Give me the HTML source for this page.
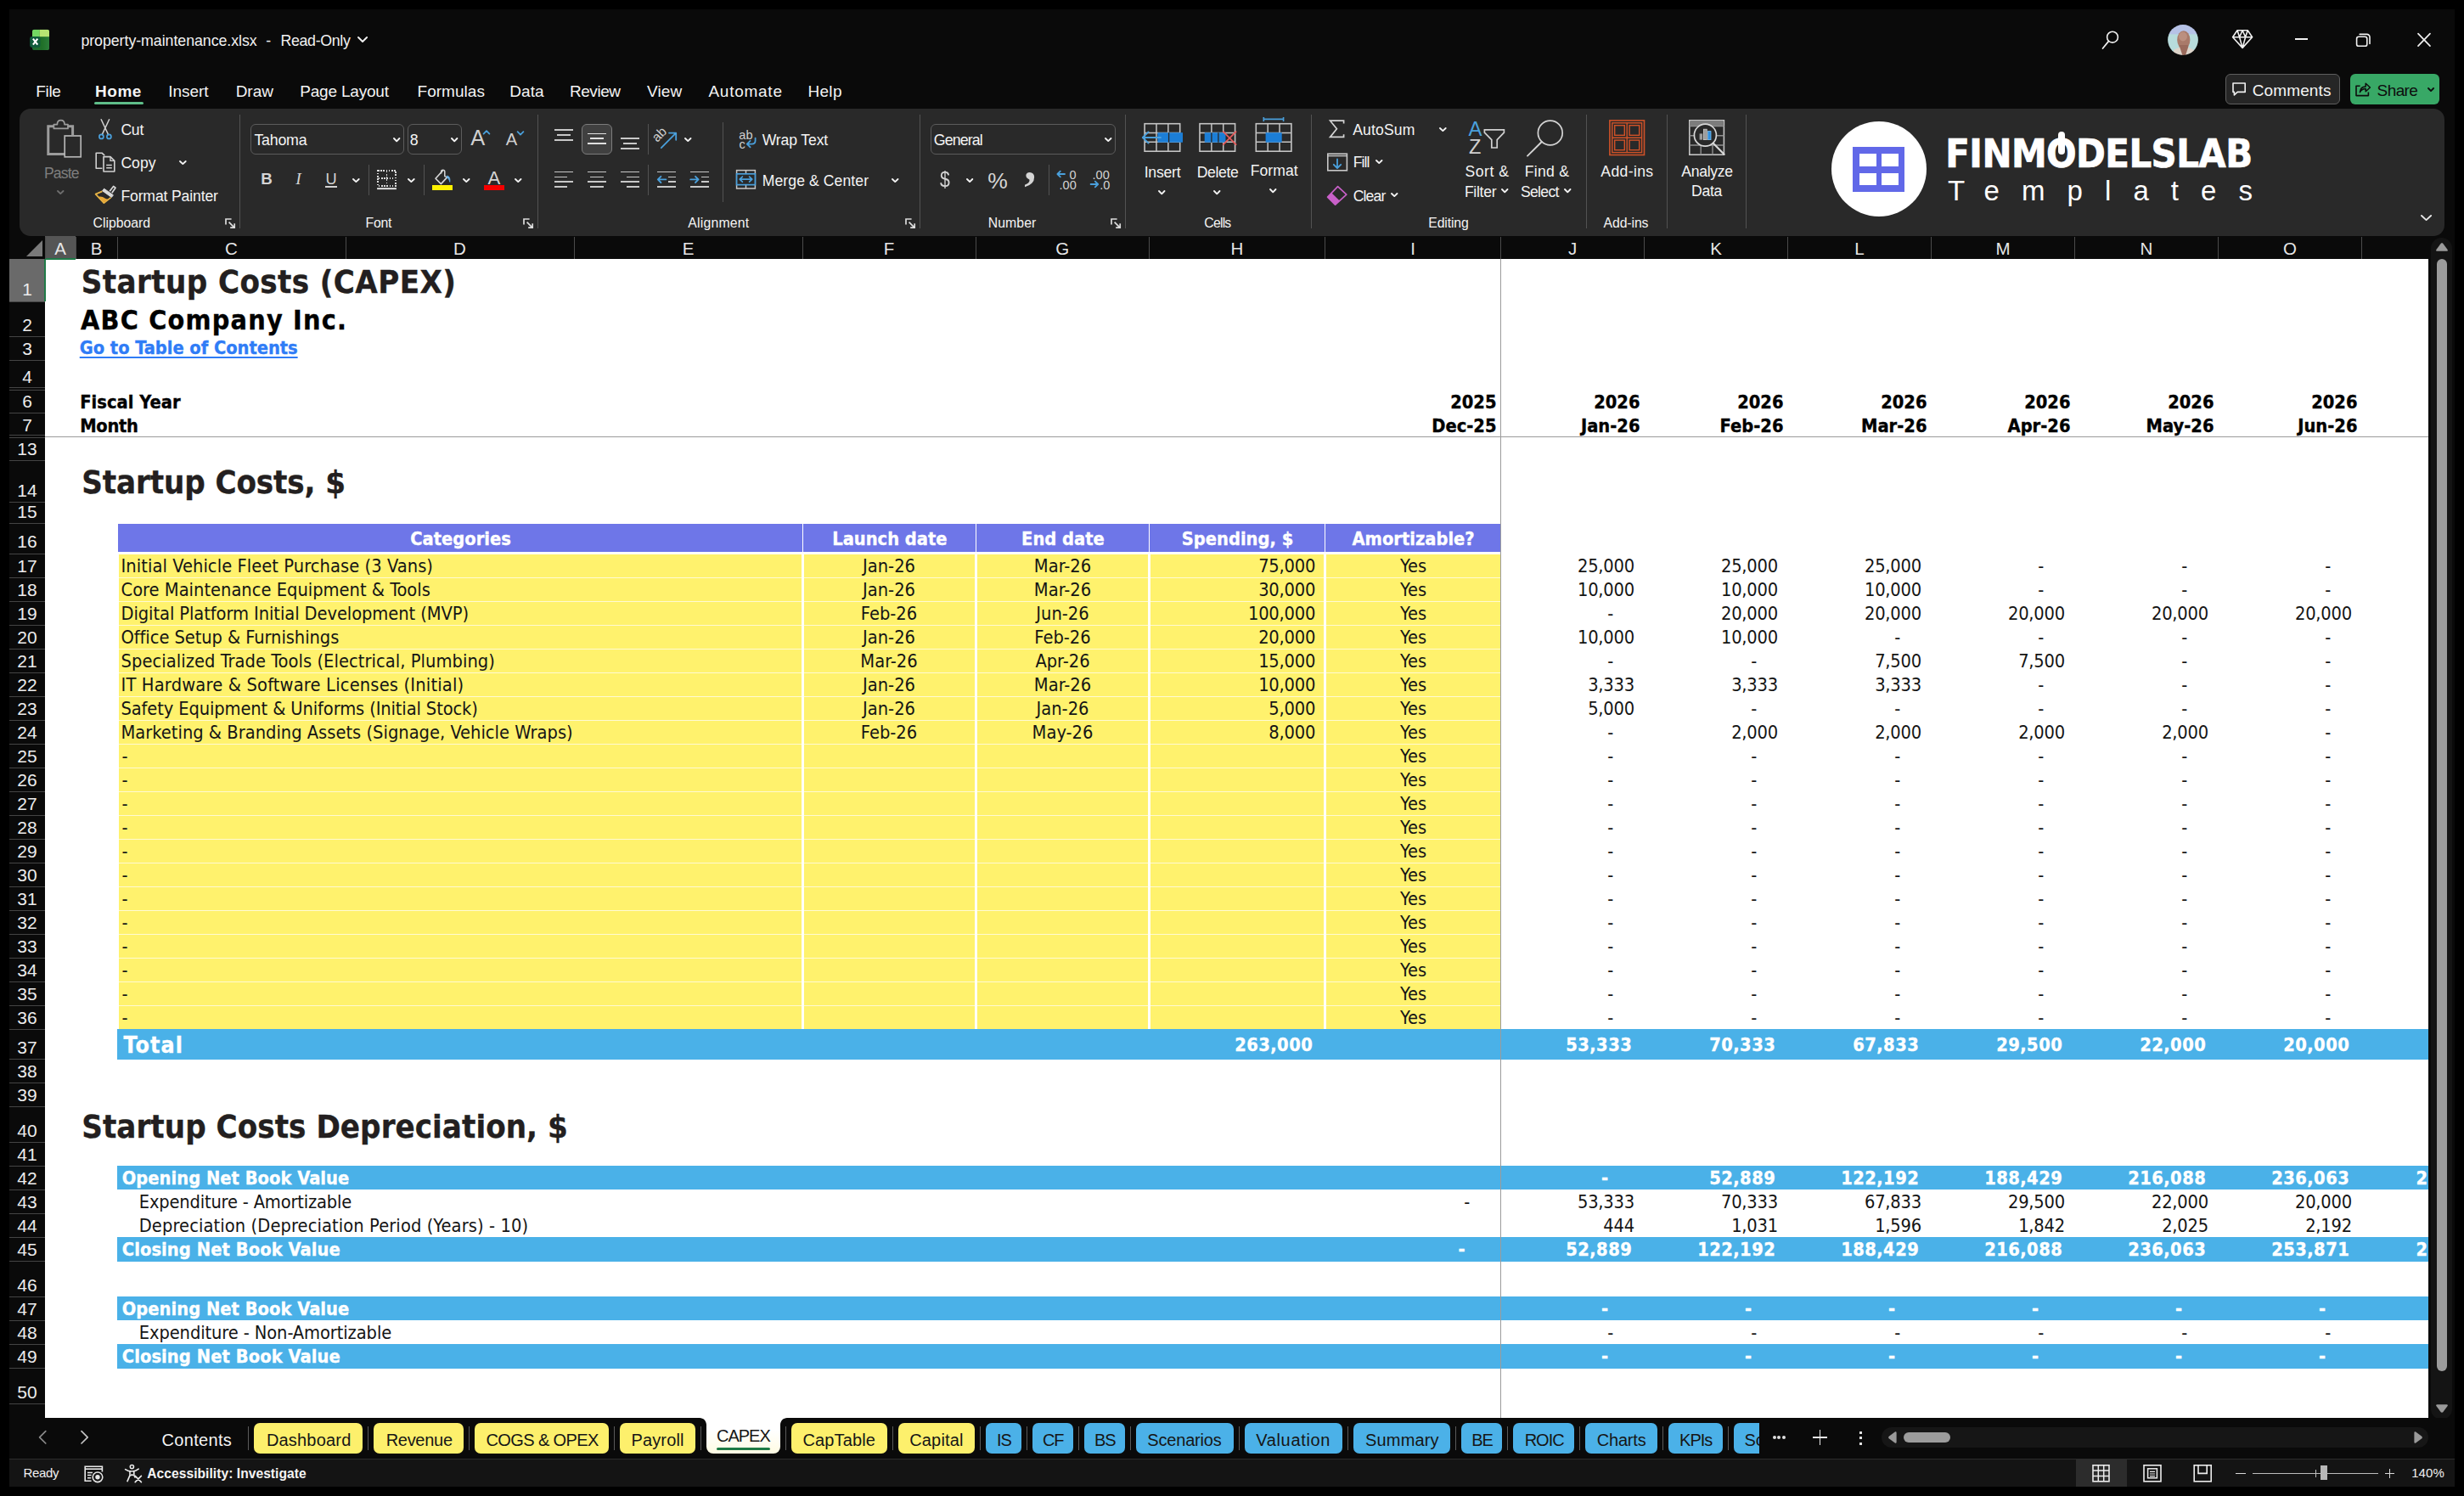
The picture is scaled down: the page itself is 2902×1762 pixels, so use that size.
<!DOCTYPE html>
<html lang="en"><head><meta charset="utf-8"><title>property-maintenance.xlsx - Excel</title>
<style>
html,body{margin:0;padding:0;background:#000;}
body{width:2902px;height:1762px;position:relative;overflow:hidden;font-family:'Liberation Sans',sans-serif;}
.a,.s,.u{position:absolute;}
.s,.u{line-height:1;white-space:pre;}
.s{font-family:'DejaVu Sans Condensed','Liberation Sans',sans-serif;}
.u{font-family:'Liberation Sans',sans-serif;}
.bd{-webkit-text-stroke-width:.35px;}
#win{position:absolute;left:11px;top:11px;width:2880px;height:1739px;background:#0a0a0a;}
svg{overflow:visible;}
</style></head>
<body>
<div id="win"></div>
<div class="a" style="left:53px;top:305px;width:2807px;height:1364.5px;background:#fff;"></div>
<div class="a" style="left:11px;top:278px;width:2849px;height:27px;background:#0a0a0a;"></div>
<div class="a" style="left:53px;top:278px;width:36px;height:27px;background:#555;border-bottom:1.3px solid #1f7a48;box-sizing:border-box;"></div>
<svg class="a" style="left:28px;top:281px" width="24" height="23" viewBox="0 0 24 23"><path d="M22 2V21H3Z" fill="#7a7a7a"/></svg>
<span class="u" style="top:283.02px;font-size:20.5px;color:#e6e6e6;left:71px;transform:translateX(-50%);">A</span>
<span class="u" style="top:283.02px;font-size:20.5px;color:#e6e6e6;left:113.5px;transform:translateX(-50%);">B</span>
<span class="u" style="top:283.02px;font-size:20.5px;color:#e6e6e6;left:272.5px;transform:translateX(-50%);">C</span>
<span class="u" style="top:283.02px;font-size:20.5px;color:#e6e6e6;left:541.5px;transform:translateX(-50%);">D</span>
<span class="u" style="top:283.02px;font-size:20.5px;color:#e6e6e6;left:810.5px;transform:translateX(-50%);">E</span>
<span class="u" style="top:283.02px;font-size:20.5px;color:#e6e6e6;left:1047px;transform:translateX(-50%);">F</span>
<span class="u" style="top:283.02px;font-size:20.5px;color:#e6e6e6;left:1251.25px;transform:translateX(-50%);">G</span>
<span class="u" style="top:283.02px;font-size:20.5px;color:#e6e6e6;left:1457px;transform:translateX(-50%);">H</span>
<span class="u" style="top:283.02px;font-size:20.5px;color:#e6e6e6;left:1664px;transform:translateX(-50%);">I</span>
<span class="u" style="top:283.02px;font-size:20.5px;color:#e6e6e6;left:1852px;transform:translateX(-50%);">J</span>
<span class="u" style="top:283.02px;font-size:20.5px;color:#e6e6e6;left:2021px;transform:translateX(-50%);">K</span>
<span class="u" style="top:283.02px;font-size:20.5px;color:#e6e6e6;left:2190px;transform:translateX(-50%);">L</span>
<span class="u" style="top:283.02px;font-size:20.5px;color:#e6e6e6;left:2359px;transform:translateX(-50%);">M</span>
<span class="u" style="top:283.02px;font-size:20.5px;color:#e6e6e6;left:2528px;transform:translateX(-50%);">N</span>
<span class="u" style="top:283.02px;font-size:20.5px;color:#e6e6e6;left:2697px;transform:translateX(-50%);">O</span>
<div class="a" style="left:88.5px;top:279px;width:1px;height:26px;background:#4b4b4b;"></div>
<div class="a" style="left:137.5px;top:279px;width:1px;height:26px;background:#4b4b4b;"></div>
<div class="a" style="left:406.5px;top:279px;width:1px;height:26px;background:#4b4b4b;"></div>
<div class="a" style="left:675.5px;top:279px;width:1px;height:26px;background:#4b4b4b;"></div>
<div class="a" style="left:944.5px;top:279px;width:1px;height:26px;background:#4b4b4b;"></div>
<div class="a" style="left:1148.5px;top:279px;width:1px;height:26px;background:#4b4b4b;"></div>
<div class="a" style="left:1353px;top:279px;width:1px;height:26px;background:#4b4b4b;"></div>
<div class="a" style="left:1560px;top:279px;width:1px;height:26px;background:#4b4b4b;"></div>
<div class="a" style="left:1767px;top:279px;width:1px;height:26px;background:#4b4b4b;"></div>
<div class="a" style="left:1936px;top:279px;width:1px;height:26px;background:#4b4b4b;"></div>
<div class="a" style="left:2105px;top:279px;width:1px;height:26px;background:#4b4b4b;"></div>
<div class="a" style="left:2274px;top:279px;width:1px;height:26px;background:#4b4b4b;"></div>
<div class="a" style="left:2443px;top:279px;width:1px;height:26px;background:#4b4b4b;"></div>
<div class="a" style="left:2612px;top:279px;width:1px;height:26px;background:#4b4b4b;"></div>
<div class="a" style="left:2781px;top:279px;width:1px;height:26px;background:#4b4b4b;"></div>
<div class="a" style="left:52.5px;top:279px;width:1px;height:26px;background:#4b4b4b;"></div>
<div class="a" style="left:11px;top:305px;width:42px;height:1364.5px;background:#0a0a0a;"></div>
<div class="a" style="left:11px;top:305px;width:42px;height:50px;background:#6a6a6a;border-right:1.3px solid #1f7a48;box-sizing:border-box;"></div>
<span class="u" style="top:330.04px;font-size:21px;color:#ececec;left:32px;transform:translateX(-50%);">1</span>
<div class="a" style="left:11px;top:354.5px;width:42px;height:1px;background:#444;"></div>
<span class="u" style="top:372.04px;font-size:21px;color:#ececec;left:32px;transform:translateX(-50%);">2</span>
<div class="a" style="left:11px;top:395.5px;width:42px;height:1px;background:#444;"></div>
<span class="u" style="top:400.04px;font-size:21px;color:#ececec;left:32px;transform:translateX(-50%);">3</span>
<div class="a" style="left:11px;top:424px;width:42px;height:1px;background:#444;"></div>
<span class="u" style="top:433.04px;font-size:21px;color:#ececec;left:32px;transform:translateX(-50%);">4</span>
<div class="a" style="left:11px;top:455.5px;width:42px;height:1px;background:#444;"></div>
<span class="u" style="top:462.04px;font-size:21px;color:#ececec;left:32px;transform:translateX(-50%);">6</span>
<div class="a" style="left:11px;top:485.5px;width:42px;height:1px;background:#444;"></div>
<span class="u" style="top:490.04px;font-size:21px;color:#ececec;left:32px;transform:translateX(-50%);">7</span>
<div class="a" style="left:11px;top:512px;width:42px;height:1px;background:#444;"></div>
<span class="u" style="top:518.04px;font-size:21px;color:#ececec;left:32px;transform:translateX(-50%);">13</span>
<div class="a" style="left:11px;top:541.5px;width:42px;height:1px;background:#444;"></div>
<span class="u" style="top:567.04px;font-size:21px;color:#ececec;left:32px;transform:translateX(-50%);">14</span>
<div class="a" style="left:11px;top:591px;width:42px;height:1px;background:#444;"></div>
<span class="u" style="top:592.04px;font-size:21px;color:#ececec;left:32px;transform:translateX(-50%);">15</span>
<div class="a" style="left:11px;top:616px;width:42px;height:1px;background:#444;"></div>
<span class="u" style="top:627.04px;font-size:21px;color:#ececec;left:32px;transform:translateX(-50%);">16</span>
<div class="a" style="left:11px;top:652px;width:42px;height:1px;background:#444;"></div>
<span class="u" style="top:656.04px;font-size:21px;color:#ececec;left:32px;transform:translateX(-50%);">17</span>
<div class="a" style="left:11px;top:680px;width:42px;height:1px;background:#444;"></div>
<span class="u" style="top:684.04px;font-size:21px;color:#ececec;left:32px;transform:translateX(-50%);">18</span>
<div class="a" style="left:11px;top:708px;width:42px;height:1px;background:#444;"></div>
<span class="u" style="top:712.04px;font-size:21px;color:#ececec;left:32px;transform:translateX(-50%);">19</span>
<div class="a" style="left:11px;top:736px;width:42px;height:1px;background:#444;"></div>
<span class="u" style="top:740.04px;font-size:21px;color:#ececec;left:32px;transform:translateX(-50%);">20</span>
<div class="a" style="left:11px;top:764px;width:42px;height:1px;background:#444;"></div>
<span class="u" style="top:768.04px;font-size:21px;color:#ececec;left:32px;transform:translateX(-50%);">21</span>
<div class="a" style="left:11px;top:792px;width:42px;height:1px;background:#444;"></div>
<span class="u" style="top:796.04px;font-size:21px;color:#ececec;left:32px;transform:translateX(-50%);">22</span>
<div class="a" style="left:11px;top:820px;width:42px;height:1px;background:#444;"></div>
<span class="u" style="top:824.04px;font-size:21px;color:#ececec;left:32px;transform:translateX(-50%);">23</span>
<div class="a" style="left:11px;top:848px;width:42px;height:1px;background:#444;"></div>
<span class="u" style="top:852.04px;font-size:21px;color:#ececec;left:32px;transform:translateX(-50%);">24</span>
<div class="a" style="left:11px;top:876px;width:42px;height:1px;background:#444;"></div>
<span class="u" style="top:880.04px;font-size:21px;color:#ececec;left:32px;transform:translateX(-50%);">25</span>
<div class="a" style="left:11px;top:904px;width:42px;height:1px;background:#444;"></div>
<span class="u" style="top:908.04px;font-size:21px;color:#ececec;left:32px;transform:translateX(-50%);">26</span>
<div class="a" style="left:11px;top:932px;width:42px;height:1px;background:#444;"></div>
<span class="u" style="top:936.04px;font-size:21px;color:#ececec;left:32px;transform:translateX(-50%);">27</span>
<div class="a" style="left:11px;top:960px;width:42px;height:1px;background:#444;"></div>
<span class="u" style="top:964.04px;font-size:21px;color:#ececec;left:32px;transform:translateX(-50%);">28</span>
<div class="a" style="left:11px;top:988px;width:42px;height:1px;background:#444;"></div>
<span class="u" style="top:992.04px;font-size:21px;color:#ececec;left:32px;transform:translateX(-50%);">29</span>
<div class="a" style="left:11px;top:1016px;width:42px;height:1px;background:#444;"></div>
<span class="u" style="top:1020.04px;font-size:21px;color:#ececec;left:32px;transform:translateX(-50%);">30</span>
<div class="a" style="left:11px;top:1044px;width:42px;height:1px;background:#444;"></div>
<span class="u" style="top:1048.04px;font-size:21px;color:#ececec;left:32px;transform:translateX(-50%);">31</span>
<div class="a" style="left:11px;top:1072px;width:42px;height:1px;background:#444;"></div>
<span class="u" style="top:1076.04px;font-size:21px;color:#ececec;left:32px;transform:translateX(-50%);">32</span>
<div class="a" style="left:11px;top:1100px;width:42px;height:1px;background:#444;"></div>
<span class="u" style="top:1104.04px;font-size:21px;color:#ececec;left:32px;transform:translateX(-50%);">33</span>
<div class="a" style="left:11px;top:1128px;width:42px;height:1px;background:#444;"></div>
<span class="u" style="top:1132.04px;font-size:21px;color:#ececec;left:32px;transform:translateX(-50%);">34</span>
<div class="a" style="left:11px;top:1156px;width:42px;height:1px;background:#444;"></div>
<span class="u" style="top:1160.04px;font-size:21px;color:#ececec;left:32px;transform:translateX(-50%);">35</span>
<div class="a" style="left:11px;top:1184px;width:42px;height:1px;background:#444;"></div>
<span class="u" style="top:1188.04px;font-size:21px;color:#ececec;left:32px;transform:translateX(-50%);">36</span>
<div class="a" style="left:11px;top:1212px;width:42px;height:1px;background:#444;"></div>
<span class="u" style="top:1223.04px;font-size:21px;color:#ececec;left:32px;transform:translateX(-50%);">37</span>
<div class="a" style="left:11px;top:1247px;width:42px;height:1px;background:#444;"></div>
<span class="u" style="top:1251.04px;font-size:21px;color:#ececec;left:32px;transform:translateX(-50%);">38</span>
<div class="a" style="left:11px;top:1275px;width:42px;height:1px;background:#444;"></div>
<span class="u" style="top:1279.04px;font-size:21px;color:#ececec;left:32px;transform:translateX(-50%);">39</span>
<div class="a" style="left:11px;top:1303px;width:42px;height:1px;background:#444;"></div>
<span class="u" style="top:1321.04px;font-size:21px;color:#ececec;left:32px;transform:translateX(-50%);">40</span>
<div class="a" style="left:11px;top:1345px;width:42px;height:1px;background:#444;"></div>
<span class="u" style="top:1349.04px;font-size:21px;color:#ececec;left:32px;transform:translateX(-50%);">41</span>
<div class="a" style="left:11px;top:1373px;width:42px;height:1px;background:#444;"></div>
<span class="u" style="top:1377.04px;font-size:21px;color:#ececec;left:32px;transform:translateX(-50%);">42</span>
<div class="a" style="left:11px;top:1401px;width:42px;height:1px;background:#444;"></div>
<span class="u" style="top:1405.04px;font-size:21px;color:#ececec;left:32px;transform:translateX(-50%);">43</span>
<div class="a" style="left:11px;top:1429px;width:42px;height:1px;background:#444;"></div>
<span class="u" style="top:1433.04px;font-size:21px;color:#ececec;left:32px;transform:translateX(-50%);">44</span>
<div class="a" style="left:11px;top:1457px;width:42px;height:1px;background:#444;"></div>
<span class="u" style="top:1461.04px;font-size:21px;color:#ececec;left:32px;transform:translateX(-50%);">45</span>
<div class="a" style="left:11px;top:1485px;width:42px;height:1px;background:#444;"></div>
<span class="u" style="top:1503.04px;font-size:21px;color:#ececec;left:32px;transform:translateX(-50%);">46</span>
<div class="a" style="left:11px;top:1527px;width:42px;height:1px;background:#444;"></div>
<span class="u" style="top:1531.04px;font-size:21px;color:#ececec;left:32px;transform:translateX(-50%);">47</span>
<div class="a" style="left:11px;top:1555px;width:42px;height:1px;background:#444;"></div>
<span class="u" style="top:1559.04px;font-size:21px;color:#ececec;left:32px;transform:translateX(-50%);">48</span>
<div class="a" style="left:11px;top:1583px;width:42px;height:1px;background:#444;"></div>
<span class="u" style="top:1587.04px;font-size:21px;color:#ececec;left:32px;transform:translateX(-50%);">49</span>
<div class="a" style="left:11px;top:1611px;width:42px;height:1px;background:#444;"></div>
<span class="u" style="top:1629.04px;font-size:21px;color:#ececec;left:32px;transform:translateX(-50%);">50</span>
<div class="a" style="left:11px;top:1653px;width:42px;height:1px;background:#444;"></div>
<div class="a" style="left:11px;top:459px;width:42px;height:1px;background:#444;"></div>
<div class="a" style="left:11px;top:514.5px;width:42px;height:1px;background:#444;"></div>
<span class="s bd" style="top:313.03px;font-size:38px;color:#231f20;font-weight:700;left:95.75px;letter-spacing:0.40px;">Startup Costs (CAPEX)</span>
<span class="s bd" style="top:361.03px;font-size:32px;color:#000;font-weight:700;left:95px;letter-spacing:1.21px;">ABC Company Inc.</span>
<a class="s bd" style="top:399.04px;font-size:21.7px;color:#2f7cf6;font-weight:700;left:93.75px;text-decoration:underline;text-decoration-thickness:2px;text-underline-offset:3px;letter-spacing:-0.04px;">Go to Table of Contents</a>
<span class="s bd" style="top:463.04px;font-size:21.7px;color:#000;font-weight:700;left:94.25px;letter-spacing:0.03px;">Fiscal Year</span>
<span class="s bd" style="top:491.04px;font-size:21.7px;color:#000;font-weight:700;left:94.25px;letter-spacing:-0.30px;">Month</span>
<span class="s bd" style="top:463.04px;font-size:21.7px;color:#000;font-weight:700;right:1139.5px;">2025</span>
<span class="s bd" style="top:491.04px;font-size:21.7px;color:#000;font-weight:700;right:1139.5px;">Dec-25</span>
<span class="s bd" style="top:463.04px;font-size:21.7px;color:#000;font-weight:700;right:970.5px;">2026</span>
<span class="s bd" style="top:491.04px;font-size:21.7px;color:#000;font-weight:700;right:970.5px;">Jan-26</span>
<span class="s bd" style="top:463.04px;font-size:21.7px;color:#000;font-weight:700;right:801.5px;">2026</span>
<span class="s bd" style="top:491.04px;font-size:21.7px;color:#000;font-weight:700;right:801.5px;">Feb-26</span>
<span class="s bd" style="top:463.04px;font-size:21.7px;color:#000;font-weight:700;right:632.5px;">2026</span>
<span class="s bd" style="top:491.04px;font-size:21.7px;color:#000;font-weight:700;right:632.5px;">Mar-26</span>
<span class="s bd" style="top:463.04px;font-size:21.7px;color:#000;font-weight:700;right:463.5px;">2026</span>
<span class="s bd" style="top:491.04px;font-size:21.7px;color:#000;font-weight:700;right:463.5px;">Apr-26</span>
<span class="s bd" style="top:463.04px;font-size:21.7px;color:#000;font-weight:700;right:294.5px;">2026</span>
<span class="s bd" style="top:491.04px;font-size:21.7px;color:#000;font-weight:700;right:294.5px;">May-26</span>
<span class="s bd" style="top:463.04px;font-size:21.7px;color:#000;font-weight:700;right:125.5px;">2026</span>
<span class="s bd" style="top:491.04px;font-size:21.7px;color:#000;font-weight:700;right:125.5px;">Jun-26</span>
<span class="s bd" style="top:549.03px;font-size:38px;color:#231f20;font-weight:700;left:96.25px;letter-spacing:-0.10px;">Startup Costs, $</span>
<span class="s bd" style="top:1308.03px;font-size:38px;color:#231f20;font-weight:700;left:96.25px;letter-spacing:0.05px;">Startup Costs Depreciation, $</span>
<div class="a" style="left:139.25px;top:617px;width:805.65px;height:32.75px;background:#6e76e8;"></div>
<span class="s bd" style="top:624.04px;font-size:21.7px;color:#fff;font-weight:700;left:542.58px;transform:translateX(-50%);">Categories</span>
<div class="a" style="left:946.1px;top:617px;width:202.6px;height:32.75px;background:#6e76e8;"></div>
<span class="s bd" style="top:624.04px;font-size:21.7px;color:#fff;font-weight:700;left:1047.9px;transform:translateX(-50%);">Launch date</span>
<div class="a" style="left:1149.9px;top:617px;width:203px;height:32.75px;background:#6e76e8;"></div>
<span class="s bd" style="top:624.04px;font-size:21.7px;color:#fff;font-weight:700;left:1251.9px;transform:translateX(-50%);">End date</span>
<div class="a" style="left:1354.1px;top:617px;width:205.8px;height:32.75px;background:#6e76e8;"></div>
<span class="s bd" style="top:624.04px;font-size:21.7px;color:#fff;font-weight:700;left:1457.5px;transform:translateX(-50%);">Spending, $</span>
<div class="a" style="left:1561.1px;top:617px;width:205.9px;height:32.75px;background:#6e76e8;"></div>
<span class="s bd" style="top:624.04px;font-size:21.7px;color:#fff;font-weight:700;left:1664.55px;transform:translateX(-50%);">Amortizable?</span>
<div class="a" style="left:139.5px;top:653.25px;width:1627px;height:558.75px;background:#fff26d;"></div>
<div class="a" style="left:139.5px;top:679.9px;width:1627px;height:1.3px;background:#fffad2;"></div>
<div class="a" style="left:139.5px;top:707.9px;width:1627px;height:1.3px;background:#fffad2;"></div>
<div class="a" style="left:139.5px;top:735.9px;width:1627px;height:1.3px;background:#fffad2;"></div>
<div class="a" style="left:139.5px;top:763.9px;width:1627px;height:1.3px;background:#fffad2;"></div>
<div class="a" style="left:139.5px;top:791.9px;width:1627px;height:1.3px;background:#fffad2;"></div>
<div class="a" style="left:139.5px;top:819.9px;width:1627px;height:1.3px;background:#fffad2;"></div>
<div class="a" style="left:139.5px;top:847.9px;width:1627px;height:1.3px;background:#fffad2;"></div>
<div class="a" style="left:139.5px;top:875.9px;width:1627px;height:1.3px;background:#fffad2;"></div>
<div class="a" style="left:139.5px;top:903.9px;width:1627px;height:1.3px;background:#fffad2;"></div>
<div class="a" style="left:139.5px;top:931.9px;width:1627px;height:1.3px;background:#fffad2;"></div>
<div class="a" style="left:139.5px;top:959.9px;width:1627px;height:1.3px;background:#fffad2;"></div>
<div class="a" style="left:139.5px;top:987.9px;width:1627px;height:1.3px;background:#fffad2;"></div>
<div class="a" style="left:139.5px;top:1015.9px;width:1627px;height:1.3px;background:#fffad2;"></div>
<div class="a" style="left:139.5px;top:1043.9px;width:1627px;height:1.3px;background:#fffad2;"></div>
<div class="a" style="left:139.5px;top:1071.9px;width:1627px;height:1.3px;background:#fffad2;"></div>
<div class="a" style="left:139.5px;top:1099.9px;width:1627px;height:1.3px;background:#fffad2;"></div>
<div class="a" style="left:139.5px;top:1127.9px;width:1627px;height:1.3px;background:#fffad2;"></div>
<div class="a" style="left:139.5px;top:1155.9px;width:1627px;height:1.3px;background:#fffad2;"></div>
<div class="a" style="left:139.5px;top:1183.9px;width:1627px;height:1.3px;background:#fffad2;"></div>
<div class="a" style="left:943.85px;top:651px;width:3.3px;height:561px;background:#fffffa;"></div>
<div class="a" style="left:1147.65px;top:651px;width:3.3px;height:561px;background:#fffffa;"></div>
<div class="a" style="left:1351.85px;top:651px;width:3.3px;height:561px;background:#fffffa;"></div>
<div class="a" style="left:1558.85px;top:651px;width:3.3px;height:561px;background:#fffffa;"></div>
<span class="s" style="top:656.04px;font-size:21.7px;color:#151515;left:142.5px;letter-spacing:0.06px;">Initial Vehicle Fleet Purchase (3 Vans)</span>
<span class="s" style="top:656.04px;font-size:21.7px;color:#151515;left:1047px;transform:translateX(-50%);">Jan-26</span>
<span class="s" style="top:656.04px;font-size:21.7px;color:#151515;left:1251.5px;transform:translateX(-50%);">Mar-26</span>
<span class="s" style="top:656.04px;font-size:21.7px;color:#151515;right:1352.8px;letter-spacing:-.2px;">75,000</span>
<span class="s" style="top:656.04px;font-size:21.7px;color:#151515;left:1664.5px;transform:translateX(-50%);">Yes</span>
<span class="s" style="top:656.04px;font-size:21.7px;color:#151515;right:977px;letter-spacing:-.2px;">25,000</span>
<span class="s" style="top:656.04px;font-size:21.7px;color:#151515;right:808px;letter-spacing:-.2px;">25,000</span>
<span class="s" style="top:656.04px;font-size:21.7px;color:#151515;right:639px;letter-spacing:-.2px;">25,000</span>
<span class="s" style="top:656.04px;font-size:21.7px;color:#151515;right:495px;letter-spacing:-.2px;">-</span>
<span class="s" style="top:656.04px;font-size:21.7px;color:#151515;right:326px;letter-spacing:-.2px;">-</span>
<span class="s" style="top:656.04px;font-size:21.7px;color:#151515;right:157px;letter-spacing:-.2px;">-</span>
<span class="s" style="top:684.04px;font-size:21.7px;color:#151515;left:142.5px;">Core Maintenance Equipment &amp; Tools</span>
<span class="s" style="top:684.04px;font-size:21.7px;color:#151515;left:1047px;transform:translateX(-50%);">Jan-26</span>
<span class="s" style="top:684.04px;font-size:21.7px;color:#151515;left:1251.5px;transform:translateX(-50%);">Mar-26</span>
<span class="s" style="top:684.04px;font-size:21.7px;color:#151515;right:1352.8px;letter-spacing:-.2px;">30,000</span>
<span class="s" style="top:684.04px;font-size:21.7px;color:#151515;left:1664.5px;transform:translateX(-50%);">Yes</span>
<span class="s" style="top:684.04px;font-size:21.7px;color:#151515;right:977px;letter-spacing:-.2px;">10,000</span>
<span class="s" style="top:684.04px;font-size:21.7px;color:#151515;right:808px;letter-spacing:-.2px;">10,000</span>
<span class="s" style="top:684.04px;font-size:21.7px;color:#151515;right:639px;letter-spacing:-.2px;">10,000</span>
<span class="s" style="top:684.04px;font-size:21.7px;color:#151515;right:495px;letter-spacing:-.2px;">-</span>
<span class="s" style="top:684.04px;font-size:21.7px;color:#151515;right:326px;letter-spacing:-.2px;">-</span>
<span class="s" style="top:684.04px;font-size:21.7px;color:#151515;right:157px;letter-spacing:-.2px;">-</span>
<span class="s" style="top:712.04px;font-size:21.7px;color:#151515;left:142.5px;letter-spacing:-0.08px;">Digital Platform Initial Development (MVP)</span>
<span class="s" style="top:712.04px;font-size:21.7px;color:#151515;left:1047px;transform:translateX(-50%);">Feb-26</span>
<span class="s" style="top:712.04px;font-size:21.7px;color:#151515;left:1251.5px;transform:translateX(-50%);">Jun-26</span>
<span class="s" style="top:712.04px;font-size:21.7px;color:#151515;right:1352.8px;letter-spacing:-.2px;">100,000</span>
<span class="s" style="top:712.04px;font-size:21.7px;color:#151515;left:1664.5px;transform:translateX(-50%);">Yes</span>
<span class="s" style="top:712.04px;font-size:21.7px;color:#151515;right:1002px;letter-spacing:-.2px;">-</span>
<span class="s" style="top:712.04px;font-size:21.7px;color:#151515;right:808px;letter-spacing:-.2px;">20,000</span>
<span class="s" style="top:712.04px;font-size:21.7px;color:#151515;right:639px;letter-spacing:-.2px;">20,000</span>
<span class="s" style="top:712.04px;font-size:21.7px;color:#151515;right:470px;letter-spacing:-.2px;">20,000</span>
<span class="s" style="top:712.04px;font-size:21.7px;color:#151515;right:301px;letter-spacing:-.2px;">20,000</span>
<span class="s" style="top:712.04px;font-size:21.7px;color:#151515;right:132px;letter-spacing:-.2px;">20,000</span>
<span class="s" style="top:740.04px;font-size:21.7px;color:#151515;left:142.5px;letter-spacing:-0.07px;">Office Setup &amp; Furnishings</span>
<span class="s" style="top:740.04px;font-size:21.7px;color:#151515;left:1047px;transform:translateX(-50%);">Jan-26</span>
<span class="s" style="top:740.04px;font-size:21.7px;color:#151515;left:1251.5px;transform:translateX(-50%);">Feb-26</span>
<span class="s" style="top:740.04px;font-size:21.7px;color:#151515;right:1352.8px;letter-spacing:-.2px;">20,000</span>
<span class="s" style="top:740.04px;font-size:21.7px;color:#151515;left:1664.5px;transform:translateX(-50%);">Yes</span>
<span class="s" style="top:740.04px;font-size:21.7px;color:#151515;right:977px;letter-spacing:-.2px;">10,000</span>
<span class="s" style="top:740.04px;font-size:21.7px;color:#151515;right:808px;letter-spacing:-.2px;">10,000</span>
<span class="s" style="top:740.04px;font-size:21.7px;color:#151515;right:664px;letter-spacing:-.2px;">-</span>
<span class="s" style="top:740.04px;font-size:21.7px;color:#151515;right:495px;letter-spacing:-.2px;">-</span>
<span class="s" style="top:740.04px;font-size:21.7px;color:#151515;right:326px;letter-spacing:-.2px;">-</span>
<span class="s" style="top:740.04px;font-size:21.7px;color:#151515;right:157px;letter-spacing:-.2px;">-</span>
<span class="s" style="top:768.04px;font-size:21.7px;color:#151515;left:142.5px;letter-spacing:0.05px;">Specialized Trade Tools (Electrical, Plumbing)</span>
<span class="s" style="top:768.04px;font-size:21.7px;color:#151515;left:1047px;transform:translateX(-50%);">Mar-26</span>
<span class="s" style="top:768.04px;font-size:21.7px;color:#151515;left:1251.5px;transform:translateX(-50%);">Apr-26</span>
<span class="s" style="top:768.04px;font-size:21.7px;color:#151515;right:1352.8px;letter-spacing:-.2px;">15,000</span>
<span class="s" style="top:768.04px;font-size:21.7px;color:#151515;left:1664.5px;transform:translateX(-50%);">Yes</span>
<span class="s" style="top:768.04px;font-size:21.7px;color:#151515;right:1002px;letter-spacing:-.2px;">-</span>
<span class="s" style="top:768.04px;font-size:21.7px;color:#151515;right:833px;letter-spacing:-.2px;">-</span>
<span class="s" style="top:768.04px;font-size:21.7px;color:#151515;right:639px;letter-spacing:-.2px;">7,500</span>
<span class="s" style="top:768.04px;font-size:21.7px;color:#151515;right:470px;letter-spacing:-.2px;">7,500</span>
<span class="s" style="top:768.04px;font-size:21.7px;color:#151515;right:326px;letter-spacing:-.2px;">-</span>
<span class="s" style="top:768.04px;font-size:21.7px;color:#151515;right:157px;letter-spacing:-.2px;">-</span>
<span class="s" style="top:796.04px;font-size:21.7px;color:#151515;left:142.5px;letter-spacing:0.17px;">IT Hardware &amp; Software Licenses (Initial)</span>
<span class="s" style="top:796.04px;font-size:21.7px;color:#151515;left:1047px;transform:translateX(-50%);">Jan-26</span>
<span class="s" style="top:796.04px;font-size:21.7px;color:#151515;left:1251.5px;transform:translateX(-50%);">Mar-26</span>
<span class="s" style="top:796.04px;font-size:21.7px;color:#151515;right:1352.8px;letter-spacing:-.2px;">10,000</span>
<span class="s" style="top:796.04px;font-size:21.7px;color:#151515;left:1664.5px;transform:translateX(-50%);">Yes</span>
<span class="s" style="top:796.04px;font-size:21.7px;color:#151515;right:977px;letter-spacing:-.2px;">3,333</span>
<span class="s" style="top:796.04px;font-size:21.7px;color:#151515;right:808px;letter-spacing:-.2px;">3,333</span>
<span class="s" style="top:796.04px;font-size:21.7px;color:#151515;right:639px;letter-spacing:-.2px;">3,333</span>
<span class="s" style="top:796.04px;font-size:21.7px;color:#151515;right:495px;letter-spacing:-.2px;">-</span>
<span class="s" style="top:796.04px;font-size:21.7px;color:#151515;right:326px;letter-spacing:-.2px;">-</span>
<span class="s" style="top:796.04px;font-size:21.7px;color:#151515;right:157px;letter-spacing:-.2px;">-</span>
<span class="s" style="top:824.04px;font-size:21.7px;color:#151515;left:142.5px;letter-spacing:-0.12px;">Safety Equipment &amp; Uniforms (Initial Stock)</span>
<span class="s" style="top:824.04px;font-size:21.7px;color:#151515;left:1047px;transform:translateX(-50%);">Jan-26</span>
<span class="s" style="top:824.04px;font-size:21.7px;color:#151515;left:1251.5px;transform:translateX(-50%);">Jan-26</span>
<span class="s" style="top:824.04px;font-size:21.7px;color:#151515;right:1352.8px;letter-spacing:-.2px;">5,000</span>
<span class="s" style="top:824.04px;font-size:21.7px;color:#151515;left:1664.5px;transform:translateX(-50%);">Yes</span>
<span class="s" style="top:824.04px;font-size:21.7px;color:#151515;right:977px;letter-spacing:-.2px;">5,000</span>
<span class="s" style="top:824.04px;font-size:21.7px;color:#151515;right:833px;letter-spacing:-.2px;">-</span>
<span class="s" style="top:824.04px;font-size:21.7px;color:#151515;right:664px;letter-spacing:-.2px;">-</span>
<span class="s" style="top:824.04px;font-size:21.7px;color:#151515;right:495px;letter-spacing:-.2px;">-</span>
<span class="s" style="top:824.04px;font-size:21.7px;color:#151515;right:326px;letter-spacing:-.2px;">-</span>
<span class="s" style="top:824.04px;font-size:21.7px;color:#151515;right:157px;letter-spacing:-.2px;">-</span>
<span class="s" style="top:852.04px;font-size:21.7px;color:#151515;left:142.5px;">Marketing &amp; Branding Assets (Signage, Vehicle Wraps)</span>
<span class="s" style="top:852.04px;font-size:21.7px;color:#151515;left:1047px;transform:translateX(-50%);">Feb-26</span>
<span class="s" style="top:852.04px;font-size:21.7px;color:#151515;left:1251.5px;transform:translateX(-50%);">May-26</span>
<span class="s" style="top:852.04px;font-size:21.7px;color:#151515;right:1352.8px;letter-spacing:-.2px;">8,000</span>
<span class="s" style="top:852.04px;font-size:21.7px;color:#151515;left:1664.5px;transform:translateX(-50%);">Yes</span>
<span class="s" style="top:852.04px;font-size:21.7px;color:#151515;right:1002px;letter-spacing:-.2px;">-</span>
<span class="s" style="top:852.04px;font-size:21.7px;color:#151515;right:808px;letter-spacing:-.2px;">2,000</span>
<span class="s" style="top:852.04px;font-size:21.7px;color:#151515;right:639px;letter-spacing:-.2px;">2,000</span>
<span class="s" style="top:852.04px;font-size:21.7px;color:#151515;right:470px;letter-spacing:-.2px;">2,000</span>
<span class="s" style="top:852.04px;font-size:21.7px;color:#151515;right:301px;letter-spacing:-.2px;">2,000</span>
<span class="s" style="top:852.04px;font-size:21.7px;color:#151515;right:157px;letter-spacing:-.2px;">-</span>
<span class="s" style="top:880.04px;font-size:21.7px;color:#151515;left:143.5px;">-</span>
<span class="s" style="top:880.04px;font-size:21.7px;color:#151515;left:1664.5px;transform:translateX(-50%);">Yes</span>
<span class="s" style="top:880.04px;font-size:21.7px;color:#151515;right:1002px;letter-spacing:-.2px;">-</span>
<span class="s" style="top:880.04px;font-size:21.7px;color:#151515;right:833px;letter-spacing:-.2px;">-</span>
<span class="s" style="top:880.04px;font-size:21.7px;color:#151515;right:664px;letter-spacing:-.2px;">-</span>
<span class="s" style="top:880.04px;font-size:21.7px;color:#151515;right:495px;letter-spacing:-.2px;">-</span>
<span class="s" style="top:880.04px;font-size:21.7px;color:#151515;right:326px;letter-spacing:-.2px;">-</span>
<span class="s" style="top:880.04px;font-size:21.7px;color:#151515;right:157px;letter-spacing:-.2px;">-</span>
<span class="s" style="top:908.04px;font-size:21.7px;color:#151515;left:143.5px;">-</span>
<span class="s" style="top:908.04px;font-size:21.7px;color:#151515;left:1664.5px;transform:translateX(-50%);">Yes</span>
<span class="s" style="top:908.04px;font-size:21.7px;color:#151515;right:1002px;letter-spacing:-.2px;">-</span>
<span class="s" style="top:908.04px;font-size:21.7px;color:#151515;right:833px;letter-spacing:-.2px;">-</span>
<span class="s" style="top:908.04px;font-size:21.7px;color:#151515;right:664px;letter-spacing:-.2px;">-</span>
<span class="s" style="top:908.04px;font-size:21.7px;color:#151515;right:495px;letter-spacing:-.2px;">-</span>
<span class="s" style="top:908.04px;font-size:21.7px;color:#151515;right:326px;letter-spacing:-.2px;">-</span>
<span class="s" style="top:908.04px;font-size:21.7px;color:#151515;right:157px;letter-spacing:-.2px;">-</span>
<span class="s" style="top:936.04px;font-size:21.7px;color:#151515;left:143.5px;">-</span>
<span class="s" style="top:936.04px;font-size:21.7px;color:#151515;left:1664.5px;transform:translateX(-50%);">Yes</span>
<span class="s" style="top:936.04px;font-size:21.7px;color:#151515;right:1002px;letter-spacing:-.2px;">-</span>
<span class="s" style="top:936.04px;font-size:21.7px;color:#151515;right:833px;letter-spacing:-.2px;">-</span>
<span class="s" style="top:936.04px;font-size:21.7px;color:#151515;right:664px;letter-spacing:-.2px;">-</span>
<span class="s" style="top:936.04px;font-size:21.7px;color:#151515;right:495px;letter-spacing:-.2px;">-</span>
<span class="s" style="top:936.04px;font-size:21.7px;color:#151515;right:326px;letter-spacing:-.2px;">-</span>
<span class="s" style="top:936.04px;font-size:21.7px;color:#151515;right:157px;letter-spacing:-.2px;">-</span>
<span class="s" style="top:964.04px;font-size:21.7px;color:#151515;left:143.5px;">-</span>
<span class="s" style="top:964.04px;font-size:21.7px;color:#151515;left:1664.5px;transform:translateX(-50%);">Yes</span>
<span class="s" style="top:964.04px;font-size:21.7px;color:#151515;right:1002px;letter-spacing:-.2px;">-</span>
<span class="s" style="top:964.04px;font-size:21.7px;color:#151515;right:833px;letter-spacing:-.2px;">-</span>
<span class="s" style="top:964.04px;font-size:21.7px;color:#151515;right:664px;letter-spacing:-.2px;">-</span>
<span class="s" style="top:964.04px;font-size:21.7px;color:#151515;right:495px;letter-spacing:-.2px;">-</span>
<span class="s" style="top:964.04px;font-size:21.7px;color:#151515;right:326px;letter-spacing:-.2px;">-</span>
<span class="s" style="top:964.04px;font-size:21.7px;color:#151515;right:157px;letter-spacing:-.2px;">-</span>
<span class="s" style="top:992.04px;font-size:21.7px;color:#151515;left:143.5px;">-</span>
<span class="s" style="top:992.04px;font-size:21.7px;color:#151515;left:1664.5px;transform:translateX(-50%);">Yes</span>
<span class="s" style="top:992.04px;font-size:21.7px;color:#151515;right:1002px;letter-spacing:-.2px;">-</span>
<span class="s" style="top:992.04px;font-size:21.7px;color:#151515;right:833px;letter-spacing:-.2px;">-</span>
<span class="s" style="top:992.04px;font-size:21.7px;color:#151515;right:664px;letter-spacing:-.2px;">-</span>
<span class="s" style="top:992.04px;font-size:21.7px;color:#151515;right:495px;letter-spacing:-.2px;">-</span>
<span class="s" style="top:992.04px;font-size:21.7px;color:#151515;right:326px;letter-spacing:-.2px;">-</span>
<span class="s" style="top:992.04px;font-size:21.7px;color:#151515;right:157px;letter-spacing:-.2px;">-</span>
<span class="s" style="top:1020.04px;font-size:21.7px;color:#151515;left:143.5px;">-</span>
<span class="s" style="top:1020.04px;font-size:21.7px;color:#151515;left:1664.5px;transform:translateX(-50%);">Yes</span>
<span class="s" style="top:1020.04px;font-size:21.7px;color:#151515;right:1002px;letter-spacing:-.2px;">-</span>
<span class="s" style="top:1020.04px;font-size:21.7px;color:#151515;right:833px;letter-spacing:-.2px;">-</span>
<span class="s" style="top:1020.04px;font-size:21.7px;color:#151515;right:664px;letter-spacing:-.2px;">-</span>
<span class="s" style="top:1020.04px;font-size:21.7px;color:#151515;right:495px;letter-spacing:-.2px;">-</span>
<span class="s" style="top:1020.04px;font-size:21.7px;color:#151515;right:326px;letter-spacing:-.2px;">-</span>
<span class="s" style="top:1020.04px;font-size:21.7px;color:#151515;right:157px;letter-spacing:-.2px;">-</span>
<span class="s" style="top:1048.04px;font-size:21.7px;color:#151515;left:143.5px;">-</span>
<span class="s" style="top:1048.04px;font-size:21.7px;color:#151515;left:1664.5px;transform:translateX(-50%);">Yes</span>
<span class="s" style="top:1048.04px;font-size:21.7px;color:#151515;right:1002px;letter-spacing:-.2px;">-</span>
<span class="s" style="top:1048.04px;font-size:21.7px;color:#151515;right:833px;letter-spacing:-.2px;">-</span>
<span class="s" style="top:1048.04px;font-size:21.7px;color:#151515;right:664px;letter-spacing:-.2px;">-</span>
<span class="s" style="top:1048.04px;font-size:21.7px;color:#151515;right:495px;letter-spacing:-.2px;">-</span>
<span class="s" style="top:1048.04px;font-size:21.7px;color:#151515;right:326px;letter-spacing:-.2px;">-</span>
<span class="s" style="top:1048.04px;font-size:21.7px;color:#151515;right:157px;letter-spacing:-.2px;">-</span>
<span class="s" style="top:1076.04px;font-size:21.7px;color:#151515;left:143.5px;">-</span>
<span class="s" style="top:1076.04px;font-size:21.7px;color:#151515;left:1664.5px;transform:translateX(-50%);">Yes</span>
<span class="s" style="top:1076.04px;font-size:21.7px;color:#151515;right:1002px;letter-spacing:-.2px;">-</span>
<span class="s" style="top:1076.04px;font-size:21.7px;color:#151515;right:833px;letter-spacing:-.2px;">-</span>
<span class="s" style="top:1076.04px;font-size:21.7px;color:#151515;right:664px;letter-spacing:-.2px;">-</span>
<span class="s" style="top:1076.04px;font-size:21.7px;color:#151515;right:495px;letter-spacing:-.2px;">-</span>
<span class="s" style="top:1076.04px;font-size:21.7px;color:#151515;right:326px;letter-spacing:-.2px;">-</span>
<span class="s" style="top:1076.04px;font-size:21.7px;color:#151515;right:157px;letter-spacing:-.2px;">-</span>
<span class="s" style="top:1104.04px;font-size:21.7px;color:#151515;left:143.5px;">-</span>
<span class="s" style="top:1104.04px;font-size:21.7px;color:#151515;left:1664.5px;transform:translateX(-50%);">Yes</span>
<span class="s" style="top:1104.04px;font-size:21.7px;color:#151515;right:1002px;letter-spacing:-.2px;">-</span>
<span class="s" style="top:1104.04px;font-size:21.7px;color:#151515;right:833px;letter-spacing:-.2px;">-</span>
<span class="s" style="top:1104.04px;font-size:21.7px;color:#151515;right:664px;letter-spacing:-.2px;">-</span>
<span class="s" style="top:1104.04px;font-size:21.7px;color:#151515;right:495px;letter-spacing:-.2px;">-</span>
<span class="s" style="top:1104.04px;font-size:21.7px;color:#151515;right:326px;letter-spacing:-.2px;">-</span>
<span class="s" style="top:1104.04px;font-size:21.7px;color:#151515;right:157px;letter-spacing:-.2px;">-</span>
<span class="s" style="top:1132.04px;font-size:21.7px;color:#151515;left:143.5px;">-</span>
<span class="s" style="top:1132.04px;font-size:21.7px;color:#151515;left:1664.5px;transform:translateX(-50%);">Yes</span>
<span class="s" style="top:1132.04px;font-size:21.7px;color:#151515;right:1002px;letter-spacing:-.2px;">-</span>
<span class="s" style="top:1132.04px;font-size:21.7px;color:#151515;right:833px;letter-spacing:-.2px;">-</span>
<span class="s" style="top:1132.04px;font-size:21.7px;color:#151515;right:664px;letter-spacing:-.2px;">-</span>
<span class="s" style="top:1132.04px;font-size:21.7px;color:#151515;right:495px;letter-spacing:-.2px;">-</span>
<span class="s" style="top:1132.04px;font-size:21.7px;color:#151515;right:326px;letter-spacing:-.2px;">-</span>
<span class="s" style="top:1132.04px;font-size:21.7px;color:#151515;right:157px;letter-spacing:-.2px;">-</span>
<span class="s" style="top:1160.04px;font-size:21.7px;color:#151515;left:143.5px;">-</span>
<span class="s" style="top:1160.04px;font-size:21.7px;color:#151515;left:1664.5px;transform:translateX(-50%);">Yes</span>
<span class="s" style="top:1160.04px;font-size:21.7px;color:#151515;right:1002px;letter-spacing:-.2px;">-</span>
<span class="s" style="top:1160.04px;font-size:21.7px;color:#151515;right:833px;letter-spacing:-.2px;">-</span>
<span class="s" style="top:1160.04px;font-size:21.7px;color:#151515;right:664px;letter-spacing:-.2px;">-</span>
<span class="s" style="top:1160.04px;font-size:21.7px;color:#151515;right:495px;letter-spacing:-.2px;">-</span>
<span class="s" style="top:1160.04px;font-size:21.7px;color:#151515;right:326px;letter-spacing:-.2px;">-</span>
<span class="s" style="top:1160.04px;font-size:21.7px;color:#151515;right:157px;letter-spacing:-.2px;">-</span>
<span class="s" style="top:1188.04px;font-size:21.7px;color:#151515;left:143.5px;">-</span>
<span class="s" style="top:1188.04px;font-size:21.7px;color:#151515;left:1664.5px;transform:translateX(-50%);">Yes</span>
<span class="s" style="top:1188.04px;font-size:21.7px;color:#151515;right:1002px;letter-spacing:-.2px;">-</span>
<span class="s" style="top:1188.04px;font-size:21.7px;color:#151515;right:833px;letter-spacing:-.2px;">-</span>
<span class="s" style="top:1188.04px;font-size:21.7px;color:#151515;right:664px;letter-spacing:-.2px;">-</span>
<span class="s" style="top:1188.04px;font-size:21.7px;color:#151515;right:495px;letter-spacing:-.2px;">-</span>
<span class="s" style="top:1188.04px;font-size:21.7px;color:#151515;right:326px;letter-spacing:-.2px;">-</span>
<span class="s" style="top:1188.04px;font-size:21.7px;color:#151515;right:157px;letter-spacing:-.2px;">-</span>
<div class="a" style="left:138px;top:1212px;width:2722px;height:35.5px;background:#4ab1e8;"></div>
<span class="s bd" style="top:1218.02px;font-size:26.5px;color:#fff;font-weight:700;left:145.5px;letter-spacing:1.18px;">Total</span>
<span class="s bd" style="top:1220.04px;font-size:21.7px;color:#fff;font-weight:700;right:979.8px;letter-spacing:.45px;">53,333</span>
<span class="s bd" style="top:1220.04px;font-size:21.7px;color:#fff;font-weight:700;right:810.8px;letter-spacing:.45px;">70,333</span>
<span class="s bd" style="top:1220.04px;font-size:21.7px;color:#fff;font-weight:700;right:641.8px;letter-spacing:.45px;">67,833</span>
<span class="s bd" style="top:1220.04px;font-size:21.7px;color:#fff;font-weight:700;right:472.8px;letter-spacing:.45px;">29,500</span>
<span class="s bd" style="top:1220.04px;font-size:21.7px;color:#fff;font-weight:700;right:303.8px;letter-spacing:.45px;">22,000</span>
<span class="s bd" style="top:1220.04px;font-size:21.7px;color:#fff;font-weight:700;right:134.8px;letter-spacing:.45px;">20,000</span>
<span class="s bd" style="top:1220.04px;font-size:21.7px;color:#fff;font-weight:700;right:1355.8px;letter-spacing:.45px;">263,000</span>
<div class="a" style="left:138px;top:1373px;width:2722px;height:27.5px;background:#4ab1e8;"></div>
<span class="s bd" style="top:1377.04px;font-size:21.7px;color:#fff;font-weight:700;left:143.75px;letter-spacing:0.02px;">Opening Net Book Value</span>
<span class="s bd" style="top:1377.04px;font-size:21.7px;color:#fff;font-weight:700;right:1007.5px;letter-spacing:.45px;">-</span>
<span class="s bd" style="top:1377.04px;font-size:21.7px;color:#fff;font-weight:700;right:810.8px;letter-spacing:.45px;">52,889</span>
<span class="s bd" style="top:1377.04px;font-size:21.7px;color:#fff;font-weight:700;right:641.8px;letter-spacing:.45px;">122,192</span>
<span class="s bd" style="top:1377.04px;font-size:21.7px;color:#fff;font-weight:700;right:472.8px;letter-spacing:.45px;">188,429</span>
<span class="s bd" style="top:1377.04px;font-size:21.7px;color:#fff;font-weight:700;right:303.8px;letter-spacing:.45px;">216,088</span>
<span class="s bd" style="top:1377.04px;font-size:21.7px;color:#fff;font-weight:700;right:134.8px;letter-spacing:.45px;">236,063</span>
<span class="s bd" style="top:1377.04px;font-size:21.7px;color:#fff;font-weight:700;left:2845.6px;">2</span>
<div class="a" style="left:138px;top:1457px;width:2722px;height:28.5px;background:#4ab1e8;"></div>
<span class="s bd" style="top:1461.04px;font-size:21.7px;color:#fff;font-weight:700;left:143.75px;letter-spacing:0.08px;">Closing Net Book Value</span>
<span class="s bd" style="top:1461.04px;font-size:21.7px;color:#fff;font-weight:700;right:979.8px;letter-spacing:.45px;">52,889</span>
<span class="s bd" style="top:1461.04px;font-size:21.7px;color:#fff;font-weight:700;right:810.8px;letter-spacing:.45px;">122,192</span>
<span class="s bd" style="top:1461.04px;font-size:21.7px;color:#fff;font-weight:700;right:641.8px;letter-spacing:.45px;">188,429</span>
<span class="s bd" style="top:1461.04px;font-size:21.7px;color:#fff;font-weight:700;right:472.8px;letter-spacing:.45px;">216,088</span>
<span class="s bd" style="top:1461.04px;font-size:21.7px;color:#fff;font-weight:700;right:303.8px;letter-spacing:.45px;">236,063</span>
<span class="s bd" style="top:1461.04px;font-size:21.7px;color:#fff;font-weight:700;right:134.8px;letter-spacing:.45px;">253,871</span>
<span class="s bd" style="top:1461.04px;font-size:21.7px;color:#fff;font-weight:700;right:1176.5px;">-</span>
<span class="s bd" style="top:1461.04px;font-size:21.7px;color:#fff;font-weight:700;left:2845.6px;">2</span>
<div class="a" style="left:138px;top:1527px;width:2722px;height:27.5px;background:#4ab1e8;"></div>
<span class="s bd" style="top:1531.04px;font-size:21.7px;color:#fff;font-weight:700;left:143.75px;letter-spacing:0.02px;">Opening Net Book Value</span>
<span class="s bd" style="top:1531.04px;font-size:21.7px;color:#fff;font-weight:700;right:1007.5px;letter-spacing:.45px;">-</span>
<span class="s bd" style="top:1531.04px;font-size:21.7px;color:#fff;font-weight:700;right:838.5px;letter-spacing:.45px;">-</span>
<span class="s bd" style="top:1531.04px;font-size:21.7px;color:#fff;font-weight:700;right:669.5px;letter-spacing:.45px;">-</span>
<span class="s bd" style="top:1531.04px;font-size:21.7px;color:#fff;font-weight:700;right:500.5px;letter-spacing:.45px;">-</span>
<span class="s bd" style="top:1531.04px;font-size:21.7px;color:#fff;font-weight:700;right:331.5px;letter-spacing:.45px;">-</span>
<span class="s bd" style="top:1531.04px;font-size:21.7px;color:#fff;font-weight:700;right:162.5px;letter-spacing:.45px;">-</span>
<div class="a" style="left:138px;top:1583px;width:2722px;height:28.5px;background:#4ab1e8;"></div>
<span class="s bd" style="top:1587.04px;font-size:21.7px;color:#fff;font-weight:700;left:143.75px;letter-spacing:0.08px;">Closing Net Book Value</span>
<span class="s bd" style="top:1587.04px;font-size:21.7px;color:#fff;font-weight:700;right:1007.5px;letter-spacing:.45px;">-</span>
<span class="s bd" style="top:1587.04px;font-size:21.7px;color:#fff;font-weight:700;right:838.5px;letter-spacing:.45px;">-</span>
<span class="s bd" style="top:1587.04px;font-size:21.7px;color:#fff;font-weight:700;right:669.5px;letter-spacing:.45px;">-</span>
<span class="s bd" style="top:1587.04px;font-size:21.7px;color:#fff;font-weight:700;right:500.5px;letter-spacing:.45px;">-</span>
<span class="s bd" style="top:1587.04px;font-size:21.7px;color:#fff;font-weight:700;right:331.5px;letter-spacing:.45px;">-</span>
<span class="s bd" style="top:1587.04px;font-size:21.7px;color:#fff;font-weight:700;right:162.5px;letter-spacing:.45px;">-</span>
<span class="s" style="top:1405.04px;font-size:21.7px;color:#151515;left:163.75px;letter-spacing:-0.18px;">Expenditure - Amortizable</span>
<span class="s" style="top:1405.04px;font-size:21.7px;color:#151515;right:977px;letter-spacing:-.2px;">53,333</span>
<span class="s" style="top:1405.04px;font-size:21.7px;color:#151515;right:808px;letter-spacing:-.2px;">70,333</span>
<span class="s" style="top:1405.04px;font-size:21.7px;color:#151515;right:639px;letter-spacing:-.2px;">67,833</span>
<span class="s" style="top:1405.04px;font-size:21.7px;color:#151515;right:470px;letter-spacing:-.2px;">29,500</span>
<span class="s" style="top:1405.04px;font-size:21.7px;color:#151515;right:301px;letter-spacing:-.2px;">22,000</span>
<span class="s" style="top:1405.04px;font-size:21.7px;color:#151515;right:132px;letter-spacing:-.2px;">20,000</span>
<span class="s" style="top:1405.04px;font-size:21.7px;color:#151515;right:1170.75px;">-</span>
<span class="s" style="top:1433.04px;font-size:21.7px;color:#151515;left:163.75px;letter-spacing:0.09px;">Depreciation (Depreciation Period (Years) - 10)</span>
<span class="s" style="top:1433.04px;font-size:21.7px;color:#151515;right:977px;letter-spacing:-.2px;">444</span>
<span class="s" style="top:1433.04px;font-size:21.7px;color:#151515;right:808px;letter-spacing:-.2px;">1,031</span>
<span class="s" style="top:1433.04px;font-size:21.7px;color:#151515;right:639px;letter-spacing:-.2px;">1,596</span>
<span class="s" style="top:1433.04px;font-size:21.7px;color:#151515;right:470px;letter-spacing:-.2px;">1,842</span>
<span class="s" style="top:1433.04px;font-size:21.7px;color:#151515;right:301px;letter-spacing:-.2px;">2,025</span>
<span class="s" style="top:1433.04px;font-size:21.7px;color:#151515;right:132px;letter-spacing:-.2px;">2,192</span>
<span class="s" style="top:1559.04px;font-size:21.7px;color:#151515;left:163.75px;letter-spacing:-0.10px;">Expenditure - Non-Amortizable</span>
<span class="s" style="top:1559.04px;font-size:21.7px;color:#151515;right:1002px;letter-spacing:-.2px;">-</span>
<span class="s" style="top:1559.04px;font-size:21.7px;color:#151515;right:833px;letter-spacing:-.2px;">-</span>
<span class="s" style="top:1559.04px;font-size:21.7px;color:#151515;right:664px;letter-spacing:-.2px;">-</span>
<span class="s" style="top:1559.04px;font-size:21.7px;color:#151515;right:495px;letter-spacing:-.2px;">-</span>
<span class="s" style="top:1559.04px;font-size:21.7px;color:#151515;right:326px;letter-spacing:-.2px;">-</span>
<span class="s" style="top:1559.04px;font-size:21.7px;color:#151515;right:157px;letter-spacing:-.2px;">-</span>
<div class="a" style="left:1561px;top:1400.5px;width:206px;height:1px;background:#fff;"></div>
<div class="a" style="left:1561px;top:1554.5px;width:206px;height:1px;background:#fff;"></div>
<div class="a" style="left:53px;top:514px;width:2807px;height:1px;background:#9b9b9b;"></div>
<div class="a" style="left:1767px;top:305px;width:1px;height:1364.5px;background:#9b9b9b;"></div>
<div class="a" style="left:53px;top:305px;width:36px;height:1px;background:#1f7a48;"></div>
<div class="a" style="left:53px;top:305px;width:1px;height:50px;background:#1f7a48;"></div>
<svg class="a" style="left:34px;top:34px" width="26" height="26" viewBox="0 0 26 26"><defs><clipPath id="xl"><rect x="4" y=".7" width="20.1" height="24.4" rx="2.6"/></clipPath><linearGradient id="xg" x1="0" y1="0" x2="1" y2="0"><stop offset="0" stop-color="#1c6a33"/><stop offset=".55" stop-color="#1f6f27"/><stop offset="1" stop-color="#2c7d3a"/></linearGradient></defs><g clip-path="url(#xl)"><rect x="4" y=".7" width="20.1" height="24.4" fill="url(#xg)"/><rect x="4" y=".7" width="8.6" height="8.5" fill="#72d762"/><rect x="12.6" y=".7" width="11.5" height="8.5" fill="#b8e572"/></g><rect x="1.2" y="9" width="12.3" height="12.9" rx="2.4" fill="#0f5c3b"/><path d="M4.9 11.6L10.3 18.6M10.3 11.6L4.9 18.6" stroke="#fff" stroke-width="2.1" stroke-linecap="butt"/></svg>
<span class="u" style="top:40.02px;font-size:17.8px;color:#f2f2f2;left:95.4px;letter-spacing:-0.05px;">property-maintenance.xlsx</span>
<span class="u" style="top:40.02px;font-size:17.8px;color:#f2f2f2;left:313.3px;">-</span>
<span class="u" style="top:40.02px;font-size:17.8px;color:#f2f2f2;left:330.5px;letter-spacing:-0.34px;">Read-Only</span>
<svg class="a" style="left:420.15px;top:42.3px" width="14.1" height="9" viewBox="0 0 14.1 9"><path d="M2 2L7.05 7L12.1 2" fill="none" stroke="#f2f2f2" stroke-width="1.9" stroke-linecap="round" stroke-linejoin="round"/></svg>
<span class="u" style="top:98.03px;font-size:19px;color:#f4f4f4;left:42.3px;letter-spacing:-0.34px;">File</span>
<span class="u" style="top:98.03px;font-size:19px;color:#f4f4f4;font-weight:700;left:112px;letter-spacing:0.53px;">Home</span>
<span class="u" style="top:98.03px;font-size:19px;color:#f4f4f4;left:198.2px;letter-spacing:-0.03px;">Insert</span>
<span class="u" style="top:98.03px;font-size:19px;color:#f4f4f4;left:277.7px;letter-spacing:-0.05px;">Draw</span>
<span class="u" style="top:98.03px;font-size:19px;color:#f4f4f4;left:353.2px;letter-spacing:-0.19px;">Page Layout</span>
<span class="u" style="top:98.03px;font-size:19px;color:#f4f4f4;left:491.5px;letter-spacing:0.04px;">Formulas</span>
<span class="u" style="top:98.03px;font-size:19px;color:#f4f4f4;left:600.3px;letter-spacing:0.05px;">Data</span>
<span class="u" style="top:98.03px;font-size:19px;color:#f4f4f4;left:671px;letter-spacing:-0.46px;">Review</span>
<span class="u" style="top:98.03px;font-size:19px;color:#f4f4f4;left:762px;letter-spacing:0.12px;">View</span>
<span class="u" style="top:98.03px;font-size:19px;color:#f4f4f4;left:834.4px;letter-spacing:0.75px;">Automate</span>
<span class="u" style="top:98.03px;font-size:19px;color:#f4f4f4;left:951.4px;letter-spacing:0.34px;">Help</span>
<div class="a" style="left:111.3px;top:120.3px;width:57.5px;height:2.9px;background:#5ebd88;border-radius:2px;"></div>
<svg class="a" style="left:2470px;top:30px" width="34" height="34" viewBox="0 0 34 34"><circle cx="18" cy="13.7" r="6.4" fill="none" stroke="#f0f0f0" stroke-width="1.6"/><path d="M13.4 18.6L6.5 27" stroke="#f0f0f0" stroke-width="1.7" stroke-linecap="round"/></svg>
<svg class="a" style="left:2553px;top:28.8px" width="36" height="36" viewBox="0 0 36 36"><defs><clipPath id="av"><circle cx="18" cy="18" r="17.9"/></clipPath><filter id="avb"><feGaussianBlur stdDeviation=".7"/></filter></defs><g clip-path="url(#av)"><g filter="url(#avb)"><rect x="-2" y="-2" width="40" height="14" fill="#b6c2e6"/><rect x="-2" y="11.4" width="40" height="28" fill="#b7dcdc"/><ellipse cx="18.8" cy="18" rx="7.6" ry="10.8" fill="#a97a6a"/><ellipse cx="18" cy="14" rx="5" ry="5.4" fill="#bb8f7f"/><rect x="13.8" y="24" width="10.4" height="14" fill="#9a6a5b"/><path d="M5 38L7.6 29.4L14.2 26.4L18 38Z" fill="#ddd4ca"/><path d="M20.4 38L24.2 26.4L31 30L33.6 38Z" fill="#ddd4ca"/></g></g></svg>
<svg class="a" style="left:2627px;top:33px" width="28" height="26" viewBox="0 0 28 26"><path d="M8 2.8H20.2L25.6 10.8L14.1 23.4L2.6 10.8Z M2.6 10.8H25.6 M8 2.8L10.6 10.8L14.1 23.4L17.6 10.8L20.2 2.8 M14.1 2.8L10.6 10.8 M14.1 2.8L17.6 10.8" fill="none" stroke="#f0f0f0" stroke-width="1.6" stroke-linejoin="round"/></svg>
<div class="a" style="left:2703.2px;top:45.1px;width:15.2px;height:1.6px;background:#f0f0f0;"></div>
<svg class="a" style="left:2772px;top:36px" width="22" height="22" viewBox="0 0 22 22"><rect x="3.6" y="7.3" width="12.2" height="11" rx="2.4" fill="none" stroke="#f0f0f0" stroke-width="1.6"/><path d="M7.2 4.4H15.6A3.4 3.4 0 0 1 19 7.8V15.4" fill="none" stroke="#f0f0f0" stroke-width="1.6" stroke-linecap="round"/></svg>
<svg class="a" style="left:2845px;top:37px" width="20" height="20" viewBox="0 0 20 20"><path d="M3 2.7L17 17.2M17 2.7L3 17.2" stroke="#f0f0f0" stroke-width="1.7" stroke-linecap="round"/></svg>
<div class="a" style="left:2621px;top:87px;width:134.7px;height:36px;background:#262626;border:1px solid #5e5e5e;border-radius:6px;box-sizing:border-box;"></div>
<svg class="a" style="left:2627px;top:95px" width="20" height="20" viewBox="0 0 20 20"><path d="M3 3H17.2V13.4H8.2L4.4 16.9V13.4H3Z" fill="none" stroke="#f0f0f0" stroke-width="1.6" stroke-linejoin="round"/></svg>
<span class="u" style="top:97.02px;font-size:19px;color:#f4f4f4;left:2652.7px;letter-spacing:0.13px;">Comments</span>
<div class="a" style="left:2767.9px;top:87px;width:105px;height:36px;background:#38a866;border-radius:6px;"></div>
<svg class="a" style="left:2772px;top:94px" width="22" height="22" viewBox="0 0 22 22"><path d="M7.6 7.2H3V18.6H17.4V14.6" fill="none" stroke="#0d0d0d" stroke-width="1.6" stroke-linejoin="round"/><path d="M7.4 14.6C7.8 10.2 10.6 7.9 14.2 7.9V4.2L19.4 9L14.2 13.8V10.6C11.4 10.6 9.2 11.6 7.4 14.6Z" fill="none" stroke="#0d0d0d" stroke-width="1.5" stroke-linejoin="round"/></svg>
<span class="u" style="top:97.02px;font-size:19px;color:#0d0d0d;left:2799.6px;letter-spacing:-0.60px;">Share</span>
<svg class="a" style="left:2857.55px;top:101.85px" width="10.1" height="7.1" viewBox="0 0 10.1 7.1"><path d="M2 2L5.05 5.1L8.1 2" fill="none" stroke="#0d0d0d" stroke-width="1.9" stroke-linecap="round" stroke-linejoin="round"/></svg>
<div class="a" style="left:23px;top:128px;width:2855.5px;height:149.5px;background:#292929;border-radius:13px;"></div>
<svg class="a" style="left:52px;top:138px" width="48" height="50" viewBox="0 0 48 50"><path d="M11.6 10.8H4.8V43.4H24" fill="none" stroke="#9c9c9c" stroke-width="3"/><path d="M27.6 10.8H33.6V21" fill="none" stroke="#9c9c9c" stroke-width="3"/><path d="M11.4 13.4V8.6H15.4C15.4 5.4 17.4 3.6 19.7 3.6S24 5.4 24 8.6H28V13.4Z" fill="none" stroke="#9c9c9c" stroke-width="1.7" stroke-linejoin="round"/><rect x="24.2" y="22" width="19" height="24.8" fill="#292929" stroke="#b4b4b4" stroke-width="1.7"/></svg>
<span class="u" style="top:196.03px;font-size:17.6px;color:#7e7e7e;left:52px;letter-spacing:-0.88px;">Paste</span>
<svg class="a" style="left:66.15px;top:223.35px" width="10.5" height="7.1" viewBox="0 0 10.5 7.1"><path d="M2 2L5.25 5.1L8.5 2" fill="none" stroke="#6e6e6e" stroke-width="1.9" stroke-linecap="round" stroke-linejoin="round"/></svg>
<svg class="a" style="left:113px;top:138px" width="22" height="28" viewBox="0 0 22 28"><path d="M6.2 2.8L14.6 20.6M15.6 2.8L7.2 20.6" stroke="#d0d0d0" stroke-width="1.5" stroke-linecap="round"/><circle cx="6.4" cy="22.9" r="2.5" fill="none" stroke="#4aa0dc" stroke-width="1.7"/><circle cx="15.4" cy="22.9" r="2.5" fill="none" stroke="#4aa0dc" stroke-width="1.7"/></svg>
<span class="u" style="top:145.02px;font-size:17.6px;color:#f4f4f4;left:142.4px;letter-spacing:-0.25px;">Cut</span>
<svg class="a" style="left:110px;top:177px" width="28" height="28" viewBox="0 0 28 28"><path d="M10.4 21.2H3.2V3.2H10L13.2 6.2" fill="none" stroke="#d0d0d0" stroke-width="1.6" stroke-linejoin="round"/><path d="M12 7.6H20L24.8 12.4V25H12Z" fill="#292929" stroke="#d0d0d0" stroke-width="1.6" stroke-linejoin="round"/><path d="M20 7.6V12.4H24.8" fill="none" stroke="#d0d0d0" stroke-width="1.4"/><path d="M15.2 17.4H21.8M15.2 20.8H21.8" stroke="#d0d0d0" stroke-width="1.5"/></svg>
<span class="u" style="top:184.03px;font-size:17.6px;color:#f4f4f4;left:142.4px;">Copy</span>
<svg class="a" style="left:209.95px;top:188.15px" width="10.7" height="7.1" viewBox="0 0 10.7 7.1"><path d="M2 2L5.35 5.1L8.7 2" fill="none" stroke="#f4f4f4" stroke-width="1.9" stroke-linecap="round" stroke-linejoin="round"/></svg>
<svg class="a" style="left:110px;top:216px" width="28" height="26" viewBox="0 0 28 26"><path d="M19.2 9.2L23.6 3.4L26 5.2L21.8 11.2" fill="none" stroke="#d8d8d8" stroke-width="1.7" stroke-linejoin="round"/><path d="M12.6 6.2L23.4 13.8L21.4 16.4L10.6 8.8Z" fill="#d8d8d8" stroke="#d8d8d8" stroke-width="1" stroke-linejoin="round"/><path d="M10.4 9.4L2.6 12.6L12.4 23.2L20.6 16.6" fill="none" stroke="#e8b445" stroke-width="1.7" stroke-linejoin="round"/><path d="M6.2 15.8C9.4 15.2 11.4 16.2 13.6 17.6S17 18.6 18.4 18L12.4 22.6Z" fill="#e8a838"/></svg>
<span class="u" style="top:223.02px;font-size:17.6px;color:#f4f4f4;left:142.4px;letter-spacing:-0.14px;">Format Painter</span>
<span class="u" style="top:255.03px;font-size:15.8px;color:#f4f4f4;left:109.6px;letter-spacing:-0.03px;">Clipboard</span>
<svg class="a" style="left:265px;top:257px" width="13" height="13" viewBox="0 0 13 13"><path d="M1 7.6V1H7.6" fill="none" stroke="#dcdcdc" stroke-width="1.7"/><path d="M4.6 4.6L10.6 10.6M11.2 6.2V11.2H6.2" fill="none" stroke="#dcdcdc" stroke-width="1.7"/></svg>
<div class="a" style="left:282px;top:135px;width:1px;height:134.4px;background:#525252;"></div>
<div class="a" style="left:295.4px;top:146.3px;width:180.2px;height:35.5px;border:1px solid #5c5c5c;border-radius:6px;box-sizing:border-box;"></div>
<span class="u" style="top:157.03px;font-size:17.8px;color:#f4f4f4;left:299.4px;letter-spacing:-0.21px;">Tahoma</span>
<svg class="a" style="left:462.1px;top:160.55px" width="10.4" height="7.3" viewBox="0 0 10.4 7.3"><path d="M2 2L5.2 5.3L8.4 2" fill="none" stroke="#f4f4f4" stroke-width="1.9" stroke-linecap="round" stroke-linejoin="round"/></svg>
<div class="a" style="left:479.5px;top:146.3px;width:64px;height:35.5px;border:1px solid #5c5c5c;border-radius:6px;box-sizing:border-box;"></div>
<span class="u" style="top:157.03px;font-size:17.8px;color:#f4f4f4;left:482.7px;">8</span>
<svg class="a" style="left:530px;top:160.55px" width="10.4" height="7.3" viewBox="0 0 10.4 7.3"><path d="M2 2L5.2 5.3L8.4 2" fill="none" stroke="#f4f4f4" stroke-width="1.9" stroke-linecap="round" stroke-linejoin="round"/></svg>
<span class="u" style="top:150.02px;font-size:25.4px;color:#d0d0d0;left:554.2px;">A</span>
<svg class="a" style="left:568px;top:152px" width="10" height="8" viewBox="0 0 10 8"><path d="M1.6 5.6L5 2.2L8.4 5.6" fill="none" stroke="#4aa0dc" stroke-width="1.8" stroke-linecap="round" stroke-linejoin="round"/></svg>
<span class="u" style="top:154.03px;font-size:20.2px;color:#d0d0d0;left:595.8px;">A</span>
<svg class="a" style="left:607.5px;top:152.5px" width="10" height="8" viewBox="0 0 10 8"><path d="M1.6 2.2L5 5.6L8.4 2.2" fill="none" stroke="#4aa0dc" stroke-width="1.8" stroke-linecap="round" stroke-linejoin="round"/></svg>
<span class="u" style="top:202.02px;font-size:18.8px;color:#d4d4d4;font-weight:700;left:307.2px;">B</span>
<span class="u" style="top:201.04px;font-size:19.5px;color:#d4d4d4;left:348.2px;font-family:'Liberation Serif',serif;font-style:italic;">I</span>
<span class="u" style="top:202.03px;font-size:18.2px;color:#d4d4d4;left:383.6px;">U</span>
<div class="a" style="left:383.1px;top:219.3px;width:13.9px;height:1.6px;background:#d4d4d4;"></div>
<svg class="a" style="left:414.05px;top:209.15px" width="10.7" height="7.1" viewBox="0 0 10.7 7.1"><path d="M2 2L5.35 5.1L8.7 2" fill="none" stroke="#f4f4f4" stroke-width="1.9" stroke-linecap="round" stroke-linejoin="round"/></svg>
<div class="a" style="left:434px;top:194.2px;width:1px;height:36.1px;background:#525252;"></div>
<svg class="a" style="left:443px;top:198px" width="26" height="26" viewBox="0 0 26 26"><rect x="1.9" y="2.9" width="21.1" height="17.9" fill="none" stroke="#dcdcdc" stroke-width="1.6" stroke-dasharray="1.6 1.6" shape-rendering="crispEdges"/><path d="M12.45 3.7V20M2.7 11.85H22.2" stroke="#dcdcdc" stroke-width="1.5" stroke-dasharray="1.6 1.6" shape-rendering="crispEdges"/><path d="M1.1 24.2H23.9" stroke="#ececec" stroke-width="1.9"/></svg>
<svg class="a" style="left:479.05px;top:209.15px" width="10.7" height="7.1" viewBox="0 0 10.7 7.1"><path d="M2 2L5.35 5.1L8.7 2" fill="none" stroke="#f4f4f4" stroke-width="1.9" stroke-linecap="round" stroke-linejoin="round"/></svg>
<div class="a" style="left:498.7px;top:194.2px;width:1px;height:36.1px;background:#525252;"></div>
<svg class="a" style="left:509px;top:198px" width="26" height="20" viewBox="0 0 26 20"><path d="M12.2 3.2L4 12.3L10.4 18.6L17.8 10.6" fill="none" stroke="#d8d8d8" stroke-width="1.6" stroke-linejoin="round" stroke-linecap="round"/><path d="M10.6 6.4V4.2C10.6 1.6 14.8 1.6 14.8 4.2V9.6L17.8 10.6" fill="none" stroke="#d8d8d8" stroke-width="1.5" stroke-linejoin="round"/><path d="M17.4 9.2C20 9 21.4 12 20.8 16.4C20 13.4 19 11.6 17.2 11Z" fill="#7cc0f0" stroke="#5aaae6" stroke-width=".8"/></svg>
<div class="a" style="left:508.6px;top:218px;width:24.4px;height:5.8px;background:#fff200;"></div>
<svg class="a" style="left:543.95px;top:209.15px" width="10.5" height="7.1" viewBox="0 0 10.5 7.1"><path d="M2 2L5.25 5.1L8.5 2" fill="none" stroke="#f4f4f4" stroke-width="1.9" stroke-linecap="round" stroke-linejoin="round"/></svg>
<span class="u" style="top:199.03px;font-size:22.2px;color:#d4d4d4;left:574.6px;">A</span>
<div class="a" style="left:569.9px;top:218px;width:24px;height:5.8px;background:#f40000;"></div>
<svg class="a" style="left:604.95px;top:209.15px" width="10.5" height="7.1" viewBox="0 0 10.5 7.1"><path d="M2 2L5.25 5.1L8.5 2" fill="none" stroke="#f4f4f4" stroke-width="1.9" stroke-linecap="round" stroke-linejoin="round"/></svg>
<span class="u" style="top:255.03px;font-size:15.8px;color:#f4f4f4;left:430.6px;letter-spacing:-0.30px;">Font</span>
<svg class="a" style="left:615.6px;top:257px" width="13" height="13" viewBox="0 0 13 13"><path d="M1 7.6V1H7.6" fill="none" stroke="#dcdcdc" stroke-width="1.7"/><path d="M4.6 4.6L10.6 10.6M11.2 6.2V11.2H6.2" fill="none" stroke="#dcdcdc" stroke-width="1.7"/></svg>
<div class="a" style="left:632.9px;top:134.6px;width:1px;height:134.4px;background:#525252;"></div>
<div class="a" style="left:653.2px;top:152px;width:21.8px;height:1.6px;background:#c8c8c8;"></div><div class="a" style="left:655.8px;top:158.2px;width:16.4px;height:1.6px;background:#c8c8c8;"></div><div class="a" style="left:653.2px;top:164.2px;width:21.8px;height:1.6px;background:#c8c8c8;"></div>
<div class="a" style="left:685.3px;top:146.3px;width:35.4px;height:35.5px;background:#404040;border:1px solid #7c7c7c;border-radius:6px;box-sizing:border-box;"></div>
<div class="a" style="left:691.8px;top:156.7px;width:22px;height:1.6px;background:#e0e0e0;"></div><div class="a" style="left:694.6px;top:162.4px;width:16.4px;height:1.6px;background:#e0e0e0;"></div><div class="a" style="left:691.8px;top:168.3px;width:22px;height:1.6px;background:#e0e0e0;"></div>
<div class="a" style="left:731px;top:162.4px;width:21.8px;height:1.6px;background:#c8c8c8;"></div><div class="a" style="left:733.8px;top:168.3px;width:16.2px;height:1.6px;background:#c8c8c8;"></div><div class="a" style="left:731px;top:174.2px;width:21.8px;height:1.6px;background:#c8c8c8;"></div>
<div class="a" style="left:762.8px;top:146.3px;width:1px;height:35.5px;background:#525252;"></div>
<svg class="a" style="left:771px;top:150px" width="30" height="27" viewBox="0 0 30 27"><path d="M7.8 24.2L24.4 7.4M17 6.6H25.2V14.8" fill="none" stroke="#4aa0dc" stroke-width="1.8" stroke-linecap="round" stroke-linejoin="round"/></svg>
<span class="u" style="top:155.49px;font-size:15.5px;color:#d0d0d0;left:774.2px;transform:rotate(-45deg);transform-origin:0 85%;">ab</span>
<svg class="a" style="left:805.05px;top:161.15px" width="10.5" height="7.1" viewBox="0 0 10.5 7.1"><path d="M2 2L5.25 5.1L8.5 2" fill="none" stroke="#f4f4f4" stroke-width="1.9" stroke-linecap="round" stroke-linejoin="round"/></svg>
<div class="a" style="left:850.9px;top:144.4px;width:1px;height:93.7px;background:#525252;"></div>
<span class="u" style="top:152.02px;font-size:14.6px;color:#d0d0d0;left:870.2px;letter-spacing:0.27px;">ab</span>
<span class="u" style="top:163.02px;font-size:14.6px;color:#d0d0d0;left:870.6px;">c</span>
<svg class="a" style="left:877px;top:160px" width="16" height="16" viewBox="0 0 16 16"><path d="M12.6 2.6V5.4C12.6 8 11 9.6 8.4 9.6H3.2M6.6 5.8L2.8 9.6L6.6 13.4" fill="none" stroke="#4aa0dc" stroke-width="1.8" stroke-linecap="round" stroke-linejoin="round"/></svg>
<span class="u" style="top:157.03px;font-size:17.6px;color:#f4f4f4;left:897.7px;letter-spacing:-0.13px;">Wrap Text</span>
<div class="a" style="left:653.2px;top:201.5px;width:21.8px;height:1.6px;background:#c8c8c8;"></div><div class="a" style="left:653.2px;top:207.5px;width:15.3px;height:1.6px;background:#c8c8c8;"></div><div class="a" style="left:653.2px;top:213.4px;width:21.8px;height:1.6px;background:#c8c8c8;"></div><div class="a" style="left:653.2px;top:219.3px;width:15.3px;height:1.6px;background:#c8c8c8;"></div>
<div class="a" style="left:692.4px;top:201.5px;width:21.4px;height:1.6px;background:#c8c8c8;"></div><div class="a" style="left:695.2px;top:207.5px;width:15.8px;height:1.6px;background:#c8c8c8;"></div><div class="a" style="left:692.4px;top:213.4px;width:21.4px;height:1.6px;background:#c8c8c8;"></div><div class="a" style="left:695.2px;top:219.3px;width:15.8px;height:1.6px;background:#c8c8c8;"></div>
<div class="a" style="left:731.4px;top:201.5px;width:21.4px;height:1.6px;background:#c8c8c8;"></div><div class="a" style="left:737.5px;top:207.5px;width:15.3px;height:1.6px;background:#c8c8c8;"></div><div class="a" style="left:731.4px;top:213.4px;width:21.4px;height:1.6px;background:#c8c8c8;"></div><div class="a" style="left:737.5px;top:219.3px;width:15.3px;height:1.6px;background:#c8c8c8;"></div>
<div class="a" style="left:762.8px;top:193.7px;width:1px;height:36px;background:#525252;"></div>
<div class="a" style="left:774px;top:201.5px;width:21.8px;height:1.6px;background:#c8c8c8;"></div><div class="a" style="left:787px;top:207.5px;width:8.8px;height:1.6px;background:#c8c8c8;"></div><div class="a" style="left:787px;top:213.4px;width:8.8px;height:1.6px;background:#c8c8c8;"></div><div class="a" style="left:774px;top:219.3px;width:21.8px;height:1.6px;background:#c8c8c8;"></div>
<svg class="a" style="left:772px;top:205px" width="14" height="13" viewBox="0 0 14 13"><path d="M12.4 6.4H3M6.4 2.8L2.8 6.4L6.4 10" fill="none" stroke="#4aa0dc" stroke-width="1.8" stroke-linecap="round" stroke-linejoin="round"/></svg>
<div class="a" style="left:813.1px;top:201.5px;width:21.9px;height:1.6px;background:#c8c8c8;"></div><div class="a" style="left:826.2px;top:207.5px;width:8.8px;height:1.6px;background:#c8c8c8;"></div><div class="a" style="left:826.2px;top:213.4px;width:8.8px;height:1.6px;background:#c8c8c8;"></div><div class="a" style="left:813.1px;top:219.3px;width:21.9px;height:1.6px;background:#c8c8c8;"></div>
<svg class="a" style="left:811px;top:205px" width="14" height="13" viewBox="0 0 14 13"><path d="M2.2 6.4H11.4M8 2.8L11.6 6.4L8 10" fill="none" stroke="#4aa0dc" stroke-width="1.8" stroke-linecap="round" stroke-linejoin="round"/></svg>
<svg class="a" style="left:865px;top:198px" width="27" height="27" viewBox="0 0 27 27"><rect x="2.6" y="2.6" width="21.8" height="21.4" fill="none" stroke="#c8c8c8" stroke-width="1.5"/><path d="M13.5 2.6V7M13.5 19.6V24" stroke="#c8c8c8" stroke-width="1.5"/><rect x="2.6" y="6.8" width="21.8" height="12.8" fill="#292929" stroke="#4aa0dc" stroke-width="1.7"/><path d="M6.4 13.2H20.6M9.4 10.2L6.2 13.2L9.4 16.2M17.6 10.2L20.8 13.2L17.6 16.2" fill="none" stroke="#4aa0dc" stroke-width="1.7" stroke-linecap="round" stroke-linejoin="round"/></svg>
<span class="u" style="top:205.03px;font-size:17.6px;color:#f4f4f4;left:897.7px;letter-spacing:0.09px;">Merge &amp; Center</span>
<svg class="a" style="left:1049.25px;top:209.15px" width="10.5" height="7.1" viewBox="0 0 10.5 7.1"><path d="M2 2L5.25 5.1L8.5 2" fill="none" stroke="#f4f4f4" stroke-width="1.9" stroke-linecap="round" stroke-linejoin="round"/></svg>
<span class="u" style="top:255.03px;font-size:15.8px;color:#f4f4f4;left:810.3px;letter-spacing:0.21px;">Alignment</span>
<svg class="a" style="left:1065.6px;top:257px" width="13" height="13" viewBox="0 0 13 13"><path d="M1 7.6V1H7.6" fill="none" stroke="#dcdcdc" stroke-width="1.7"/><path d="M4.6 4.6L10.6 10.6M11.2 6.2V11.2H6.2" fill="none" stroke="#dcdcdc" stroke-width="1.7"/></svg>
<div class="a" style="left:1082.9px;top:134.6px;width:1px;height:134.4px;background:#525252;"></div>
<div class="a" style="left:1096.4px;top:146.3px;width:217.4px;height:35.5px;border:1px solid #5c5c5c;border-radius:6px;box-sizing:border-box;"></div>
<span class="u" style="top:157.03px;font-size:17.8px;color:#f4f4f4;left:1099.8px;letter-spacing:-0.88px;">General</span>
<svg class="a" style="left:1299.95px;top:161.15px" width="10.5" height="7.1" viewBox="0 0 10.5 7.1"><path d="M2 2L5.25 5.1L8.5 2" fill="none" stroke="#f4f4f4" stroke-width="1.9" stroke-linecap="round" stroke-linejoin="round"/></svg>
<span class="u" style="top:197.78px;font-size:26.5px;color:#d4d4d4;left:1107.4px;transform:scaleX(.8);transform-origin:0 0;">$</span>
<svg class="a" style="left:1137.15px;top:209.15px" width="10.3" height="7.1" viewBox="0 0 10.3 7.1"><path d="M2 2L5.15 5.1L8.3 2" fill="none" stroke="#f4f4f4" stroke-width="1.9" stroke-linecap="round" stroke-linejoin="round"/></svg>
<span class="u" style="top:200.03px;font-size:26.5px;color:#d4d4d4;left:1163.2px;">%</span>
<span class="u" style="top:164.03px;font-size:56px;color:#d4d4d4;font-weight:700;left:1206.2px;font-family:'Liberation Serif',serif;">,</span>
<div class="a" style="left:1234.7px;top:194.2px;width:1px;height:36.2px;background:#525252;"></div>
<svg class="a" style="left:1243px;top:199px" width="12" height="12" viewBox="0 0 12 12"><path d="M11 6H2.6M5.8 2.6L2.4 6L5.8 9.4" fill="none" stroke="#4aa0dc" stroke-width="1.8" stroke-linecap="round" stroke-linejoin="round"/></svg>
<span class="u" style="top:199.02px;font-size:14.5px;color:#d4d4d4;left:1259.6px;">0</span>
<span class="u" style="top:211.02px;font-size:14.5px;color:#d4d4d4;left:1247.6px;">.00</span>
<span class="u" style="top:199.02px;font-size:14.5px;color:#d4d4d4;left:1286.6px;">.00</span>
<svg class="a" style="left:1283px;top:211px" width="12" height="12" viewBox="0 0 12 12"><path d="M1.6 6H10M6.8 2.6L10.2 6L6.8 9.4" fill="none" stroke="#4aa0dc" stroke-width="1.8" stroke-linecap="round" stroke-linejoin="round"/></svg>
<span class="u" style="top:211.02px;font-size:14.5px;color:#d4d4d4;left:1295.2px;">.0</span>
<span class="u" style="top:255.03px;font-size:15.8px;color:#f4f4f4;left:1163.7px;letter-spacing:0.08px;">Number</span>
<svg class="a" style="left:1307.8px;top:257.2px" width="13" height="13" viewBox="0 0 13 13"><path d="M1 7.6V1H7.6" fill="none" stroke="#dcdcdc" stroke-width="1.7"/><path d="M4.6 4.6L10.6 10.6M11.2 6.2V11.2H6.2" fill="none" stroke="#dcdcdc" stroke-width="1.7"/></svg>
<div class="a" style="left:1325.1px;top:134.6px;width:1px;height:134.4px;background:#525252;"></div>
<svg class="a" style="left:1340px;top:136px" width="58" height="46" viewBox="0 0 58 46"><rect x="8.1" y="9.7" width="41.6" height="32.5" fill="none" stroke="#c4c4c4" stroke-width="1.6"/><path d="M21.97 9.7V42.2M35.83 9.7V42.2M8.1 20.53H49.7M8.1 31.37H49.7" stroke="#c4c4c4" stroke-width="1.5"/><rect x="23.4" y="20.2" width="29.6" height="11.5" fill="#1c7ed6"/><path d="M36.6 20.2V31.7" stroke="#292929" stroke-width="1.3"/><path d="M27 26H6.4M12.6 19.4L5.8 26L12.6 32.6" fill="none" stroke="#4aa0dc" stroke-width="1.9" stroke-linecap="round" stroke-linejoin="round"/></svg>
<span class="u" style="top:195.03px;font-size:17.6px;color:#f4f4f4;left:1347.7px;letter-spacing:-0.22px;">Insert</span>
<svg class="a" style="left:1363.15px;top:222.85px" width="10.5" height="7.3" viewBox="0 0 10.5 7.3"><path d="M2 2L5.25 5.3L8.5 2" fill="none" stroke="#f4f4f4" stroke-width="1.9" stroke-linecap="round" stroke-linejoin="round"/></svg>
<svg class="a" style="left:1405px;top:136px" width="58" height="46" viewBox="0 0 58 46"><rect x="8" y="9.7" width="41.6" height="32.5" fill="none" stroke="#c4c4c4" stroke-width="1.6"/><path d="M21.87 9.7V42.2M35.73 9.7V42.2M8 20.53H49.6M8 31.37H49.6" stroke="#c4c4c4" stroke-width="1.5"/><rect x="13.7" y="20.2" width="24.8" height="11.5" fill="#1c7ed6"/><path d="M21.9 20.2V31.7M29.9 20.2V31.7" stroke="#292929" stroke-width="1.3"/><path d="M35.8 19.2L50.6 34.2M50.6 19.2L35.8 34.2" stroke="#e25b5b" stroke-width="1.9" stroke-linecap="round"/></svg>
<span class="u" style="top:195.03px;font-size:17.6px;color:#f4f4f4;left:1409.7px;letter-spacing:-0.37px;">Delete</span>
<svg class="a" style="left:1428.15px;top:222.85px" width="10.5" height="7.3" viewBox="0 0 10.5 7.3"><path d="M2 2L5.25 5.3L8.5 2" fill="none" stroke="#f4f4f4" stroke-width="1.9" stroke-linecap="round" stroke-linejoin="round"/></svg>
<svg class="a" style="left:1471px;top:136px" width="58" height="46" viewBox="0 0 58 46"><rect x="8.3" y="9.7" width="41.6" height="32.5" fill="none" stroke="#c4c4c4" stroke-width="1.6"/><path d="M22.17 9.7V42.2M36.03 9.7V42.2M8.3 20.53H49.9M8.3 31.37H49.9" stroke="#c4c4c4" stroke-width="1.5"/><rect x="19.6" y="20.2" width="19.1" height="11.5" fill="#1c7ed6"/><path d="M17.3 4.4H40.6M17.3 1.9V6.9M40.6 1.9V6.9" stroke="#4aa0dc" stroke-width="1.6"/></svg>
<span class="u" style="top:193.03px;font-size:17.6px;color:#f4f4f4;left:1472.7px;letter-spacing:0.05px;">Format</span>
<svg class="a" style="left:1493.95px;top:220.95px" width="10.5" height="7.3" viewBox="0 0 10.5 7.3"><path d="M2 2L5.25 5.3L8.5 2" fill="none" stroke="#f4f4f4" stroke-width="1.9" stroke-linecap="round" stroke-linejoin="round"/></svg>
<span class="u" style="top:255.03px;font-size:15.8px;color:#f4f4f4;left:1418.3px;letter-spacing:-0.79px;">Cells</span>
<div class="a" style="left:1544.1px;top:134.6px;width:1px;height:134.4px;background:#525252;"></div>
<svg class="a" style="left:1563px;top:139px" width="24" height="26" viewBox="0 0 24 26"><path d="M19.6 6.4V3.2H3.6L11.4 12.8L3.6 22.4H19.6V19.2" fill="none" stroke="#d4d4d4" stroke-width="1.7" stroke-linejoin="miter"/></svg>
<span class="u" style="top:145.03px;font-size:17.6px;color:#f4f4f4;left:1593.2px;letter-spacing:0.15px;">AutoSum</span>
<svg class="a" style="left:1694.05px;top:149.05px" width="10.7" height="7.1" viewBox="0 0 10.7 7.1"><path d="M2 2L5.35 5.1L8.7 2" fill="none" stroke="#f4f4f4" stroke-width="1.9" stroke-linecap="round" stroke-linejoin="round"/></svg>
<svg class="a" style="left:1561px;top:178px" width="28" height="26" viewBox="0 0 28 26"><rect x="2.8" y="3.2" width="22.6" height="19.6" fill="none" stroke="#c8c8c8" stroke-width="1.6"/><path d="M2.8 5.6H25.4" stroke="#c8c8c8" stroke-width="1.4"/><path d="M14 9.4V19.6M9.8 15.8L14 20L18.2 15.8" fill="none" stroke="#4aa0dc" stroke-width="1.8" stroke-linecap="round" stroke-linejoin="round"/></svg>
<span class="u" style="top:183.03px;font-size:17.6px;color:#f4f4f4;left:1593.7px;letter-spacing:-0.88px;">Fill</span>
<svg class="a" style="left:1618.95px;top:187.05px" width="10.5" height="7.1" viewBox="0 0 10.5 7.1"><path d="M2 2L5.25 5.1L8.5 2" fill="none" stroke="#f4f4f4" stroke-width="1.9" stroke-linecap="round" stroke-linejoin="round"/></svg>
<svg class="a" style="left:1561px;top:217px" width="28" height="26" viewBox="0 0 28 26"><path d="M14.6 2.6L24.8 12.2L11.6 24.2L2.6 15.2Z" fill="none" stroke="#c860c8" stroke-width="1.7" stroke-linejoin="round"/><path d="M7.6 10.4L16.8 19.4L11.6 24.2L2.6 15.2Z" fill="#c860c8"/></svg>
<span class="u" style="top:223.03px;font-size:17.6px;color:#f4f4f4;left:1593.7px;letter-spacing:-0.86px;">Clear</span>
<svg class="a" style="left:1636.95px;top:225.95px" width="10.5" height="7.1" viewBox="0 0 10.5 7.1"><path d="M2 2L5.25 5.1L8.5 2" fill="none" stroke="#f4f4f4" stroke-width="1.9" stroke-linecap="round" stroke-linejoin="round"/></svg>
<span class="u" style="top:140.03px;font-size:24px;color:#4aa0dc;left:1729.4px;">A</span>
<span class="u" style="top:162.03px;font-size:23.6px;color:#d0d0d0;left:1730px;">Z</span>
<svg class="a" style="left:1746px;top:150px" width="28" height="27" viewBox="0 0 28 27"><path d="M2.4 2.8H25.4V6.2L17.2 14.6V24H10.8V14.6L2.4 6.2Z" fill="none" stroke="#d0d0d0" stroke-width="1.7" stroke-linejoin="miter"/></svg>
<span class="u" style="top:194.02px;font-size:17.6px;color:#f4f4f4;left:1725.6px;letter-spacing:0.48px;">Sort &amp;</span>
<span class="u" style="top:218.02px;font-size:17.6px;color:#f4f4f4;left:1724.9px;letter-spacing:-0.30px;">Filter</span>
<svg class="a" style="left:1766.75px;top:221.15px" width="10.5" height="7.3" viewBox="0 0 10.5 7.3"><path d="M2 2L5.25 5.3L8.5 2" fill="none" stroke="#f4f4f4" stroke-width="1.9" stroke-linecap="round" stroke-linejoin="round"/></svg>
<svg class="a" style="left:1795px;top:138px" width="50" height="50" viewBox="0 0 50 50"><circle cx="30.8" cy="18.5" r="14.4" fill="none" stroke="#d4d4d4" stroke-width="1.7"/><path d="M20.8 29L4 45.6" stroke="#d4d4d4" stroke-width="1.9" stroke-linecap="round"/></svg>
<span class="u" style="top:194.02px;font-size:17.6px;color:#f4f4f4;left:1795.8px;letter-spacing:0.27px;">Find &amp;</span>
<span class="u" style="top:218.02px;font-size:17.6px;color:#f4f4f4;left:1791px;letter-spacing:-0.70px;">Select</span>
<svg class="a" style="left:1841.25px;top:221.15px" width="10.5" height="7.3" viewBox="0 0 10.5 7.3"><path d="M2 2L5.25 5.3L8.5 2" fill="none" stroke="#f4f4f4" stroke-width="1.9" stroke-linecap="round" stroke-linejoin="round"/></svg>
<span class="u" style="top:255.03px;font-size:15.8px;color:#f4f4f4;left:1682.3px;letter-spacing:-0.14px;">Editing</span>
<div class="a" style="left:1868.2px;top:134.6px;width:1px;height:134.4px;background:#525252;"></div>
<svg class="a" style="left:1893px;top:139px" width="46" height="46" viewBox="0 0 46 46"><rect x="2.9" y="2.9" width="40.6" height="40.6" fill="none" stroke="#cf5228" stroke-width="1.6"/><rect x="5.8" y="5.8" width="34.8" height="34.8" fill="none" stroke="#cf5228" stroke-width="1.4"/><path d="M23.2 5.8V40.6M5.8 23.2H40.6" stroke="#cf5228" stroke-width="1.4"/><rect x="8.7" y="8.7" width="11.6" height="11.6" fill="none" stroke="#cf5228" stroke-width="1.4"/><rect x="8.7" y="26.1" width="11.6" height="11.6" fill="none" stroke="#cf5228" stroke-width="1.4"/><rect x="26.1" y="8.7" width="11.6" height="11.6" fill="none" stroke="#cf5228" stroke-width="1.4"/><rect x="26.1" y="26.1" width="11.6" height="11.6" fill="none" stroke="#cf5228" stroke-width="1.4"/></svg>
<span class="u" style="top:194.02px;font-size:17.6px;color:#f4f4f4;left:1885.3px;letter-spacing:0.37px;">Add-ins</span>
<span class="u" style="top:255.03px;font-size:15.8px;color:#f4f4f4;left:1888.5px;letter-spacing:-0.09px;">Add-ins</span>
<div class="a" style="left:1963.1px;top:134.6px;width:1px;height:134.4px;background:#525252;"></div>
<svg class="a" style="left:1987px;top:139px" width="46" height="46" viewBox="0 0 46 46"><rect x="2.8" y="2.8" width="40.6" height="40.4" fill="none" stroke="#c4c4c4" stroke-width="1.6"/><rect x="3.6" y="3.6" width="39" height="5.6" fill="#7c7c7c"/><path d="M2.8 9.6H43.4M2.8 20.8H43.4M2.8 32H43.4M16.2 9.6V43.2M30 9.6V43.2" stroke="#8e8e8e" stroke-width="1.4"/><circle cx="21.4" cy="20.2" r="13" fill="#292929" stroke="#d8d8d8" stroke-width="1.7"/><rect x="14.6" y="18.4" width="3.6" height="7.2" fill="#9a9a9a"/><rect x="19.4" y="13.2" width="3.8" height="12.4" fill="#9a9a9a" stroke="#d0d0d0" stroke-width=".8"/><rect x="24.4" y="15.6" width="3.6" height="10" fill="#2f8fe0" stroke="#7cc0f0" stroke-width=".8"/><path d="M30.8 29.8L43.6 42.8" stroke="#d8d8d8" stroke-width="2.2" stroke-linecap="round"/></svg>
<span class="u" style="top:194.02px;font-size:17.6px;color:#f4f4f4;left:1980.3px;letter-spacing:-0.30px;">Analyze</span>
<span class="u" style="top:217.03px;font-size:17.6px;color:#f4f4f4;left:1992.1px;letter-spacing:-0.29px;">Data</span>
<div class="a" style="left:2055.8px;top:134.6px;width:1px;height:134.4px;background:#525252;"></div>
<div class="a" style="left:2156.5px;top:142.7px;width:112.5px;height:112.5px;background:#fff;border-radius:50%;"></div>
<div class="a" style="left:2181.8px;top:172.6px;width:61.5px;height:53.4px;background:#6168e8;"></div>
<div class="a" style="left:2190.3px;top:181px;width:19.7px;height:15px;background:#fff;"></div>
<div class="a" style="left:2190.3px;top:203.8px;width:19.7px;height:14.5px;background:#fff;"></div>
<div class="a" style="left:2216.4px;top:181px;width:19.2px;height:15px;background:#fff;"></div>
<div class="a" style="left:2216.4px;top:203.8px;width:19.2px;height:14.5px;background:#fff;"></div>
<span class="s bd" style="top:158.03px;font-size:46.6px;color:#fff;font-weight:700;left:2291.3px;-webkit-text-stroke:0.7px #fff;letter-spacing:-0.57px;">FINMODELSLAB</span>
<div class="a" style="left:2423.6px;top:154.7px;width:8.8px;height:27.3px;background:#fff;border-radius:4.4px;"></div>
<span class="u" style="top:208.04px;font-size:33px;color:#fff;left:2294px;letter-spacing:26.07px;">Templates</span>
<svg class="a" style="left:2850.15px;top:252.45px" width="15.1" height="9.1" viewBox="0 0 15.1 9.1"><path d="M2 2L7.55 7.1L13.1 2" fill="none" stroke="#e6e6e6" stroke-width="1.9" stroke-linecap="round" stroke-linejoin="round"/></svg>
<div class="a" style="left:2860px;top:278px;width:31px;height:1391.7px;background:#0a0a0a;"></div>
<div class="a" style="left:2863.4px;top:280px;width:25px;height:1392px;background:#141414;border-radius:12.5px;"></div>
<svg class="a" style="left:2867px;top:284px" width="18" height="14" viewBox="0 0 18 14"><path d="M9 2.2C9.8 2.2 10.2 2.6 10.8 3.4L15.6 10C16.2 10.9 15.8 11.8 14.6 11.8H3.4C2.2 11.8 1.8 10.9 2.4 10L7.2 3.4C7.8 2.6 8.2 2.2 9 2.2Z" fill="#9a9a9a"/></svg>
<svg class="a" style="left:2867px;top:1652px" width="18" height="14" viewBox="0 0 18 14"><path d="M9 11.8C9.8 11.8 10.2 11.4 10.8 10.6L15.6 4C16.2 3.1 15.8 2.2 14.6 2.2H3.4C2.2 2.2 1.8 3.1 2.4 4L7.2 10.6C7.8 11.4 8.2 11.8 9 11.8Z" fill="#9a9a9a"/></svg>
<div class="a" style="left:2870px;top:304.5px;width:12px;height:1310.5px;background:#9c9c9c;border-radius:6px;"></div>
<div class="a" style="left:11px;top:1669.7px;width:2880px;height:48.5px;background:#0a0a0a;"></div>
<svg class="a" style="left:42px;top:1682px" width="16" height="22" viewBox="0 0 16 22"><path d="M11.8 3.6L4.6 10.8L11.8 18" fill="none" stroke="#8a8a8a" stroke-width="1.7" stroke-linecap="round" stroke-linejoin="round"/></svg>
<svg class="a" style="left:92px;top:1682px" width="16" height="22" viewBox="0 0 16 22"><path d="M4 3.6L11.2 10.8L4 18" fill="none" stroke="#c4c4c4" stroke-width="1.7" stroke-linecap="round" stroke-linejoin="round"/></svg>
<span class="u" style="top:1686.03px;font-size:20px;color:#f4f4f4;left:190.6px;letter-spacing:0.31px;">Contents</span>
<div class="a" style="left:298.7px;top:1676.2px;width:128.3px;height:35.6px;background:#fdf06c;border-radius:7px;"></div>
<span class="u" style="top:1686.03px;font-size:20px;color:#161616;left:363.7px;transform:translateX(-50%);letter-spacing:0.19px;">Dashboard</span>
<div class="a" style="left:440px;top:1676.2px;width:105.9px;height:35.6px;background:#fdf06c;border-radius:7px;"></div>
<span class="u" style="top:1686.03px;font-size:20px;color:#161616;left:493.7px;transform:translateX(-50%);letter-spacing:-0.28px;">Revenue</span>
<div class="a" style="left:558.8px;top:1676.2px;width:158.2px;height:35.6px;background:#fdf06c;border-radius:7px;"></div>
<span class="u" style="top:1686.03px;font-size:20px;color:#161616;left:638.6px;transform:translateX(-50%);letter-spacing:-0.61px;">COGS &amp; OPEX</span>
<div class="a" style="left:729.7px;top:1676.2px;width:89.3px;height:35.6px;background:#fdf06c;border-radius:7px;"></div>
<span class="u" style="top:1686.03px;font-size:20px;color:#161616;left:774.55px;transform:translateX(-50%);letter-spacing:0.16px;">Payroll</span>
<div class="a" style="left:931.7px;top:1676.2px;width:113.2px;height:35.6px;background:#fdf06c;border-radius:7px;"></div>
<span class="u" style="top:1686.03px;font-size:20px;color:#161616;left:988.25px;transform:translateX(-50%);letter-spacing:0.14px;">CapTable</span>
<div class="a" style="left:1057.9px;top:1676.2px;width:90.1px;height:35.6px;background:#fdf06c;border-radius:7px;"></div>
<span class="u" style="top:1686.03px;font-size:20px;color:#161616;left:1102.95px;transform:translateX(-50%);letter-spacing:0.17px;">Capital</span>
<div class="a" style="left:1161px;top:1676.2px;width:42.2px;height:35.6px;background:#4bb1e8;border-radius:7px;"></div>
<span class="u" style="top:1686.03px;font-size:20px;color:#161616;left:1182.5px;transform:translateX(-50%);letter-spacing:-1.00px;">IS</span>
<div class="a" style="left:1215.7px;top:1676.2px;width:48.3px;height:35.6px;background:#4bb1e8;border-radius:7px;"></div>
<span class="u" style="top:1686.03px;font-size:20px;color:#161616;left:1240.25px;transform:translateX(-50%);letter-spacing:-1.00px;">CF</span>
<div class="a" style="left:1277px;top:1676.2px;width:47.9px;height:35.6px;background:#4bb1e8;border-radius:7px;"></div>
<span class="u" style="top:1686.03px;font-size:20px;color:#161616;left:1301.35px;transform:translateX(-50%);letter-spacing:-1.00px;">BS</span>
<div class="a" style="left:1337.9px;top:1676.2px;width:114.9px;height:35.6px;background:#4bb1e8;border-radius:7px;"></div>
<span class="u" style="top:1686.03px;font-size:20px;color:#161616;left:1394.95px;transform:translateX(-50%);letter-spacing:-0.20px;">Scenarios</span>
<div class="a" style="left:1466.2px;top:1676.2px;width:114.8px;height:35.6px;background:#4bb1e8;border-radius:7px;"></div>
<span class="u" style="top:1686.03px;font-size:20px;color:#161616;left:1523.15px;transform:translateX(-50%);letter-spacing:0.67px;">Valuation</span>
<div class="a" style="left:1594.4px;top:1676.2px;width:113.6px;height:35.6px;background:#4bb1e8;border-radius:7px;"></div>
<span class="u" style="top:1686.03px;font-size:20px;color:#161616;left:1651.4px;transform:translateX(-50%);letter-spacing:0.14px;">Summary</span>
<div class="a" style="left:1721px;top:1676.2px;width:47.9px;height:35.6px;background:#4bb1e8;border-radius:7px;"></div>
<span class="u" style="top:1686.03px;font-size:20px;color:#161616;left:1745.55px;transform:translateX(-50%);letter-spacing:-1.00px;">BE</span>
<div class="a" style="left:1781.9px;top:1676.2px;width:72.1px;height:35.6px;background:#4bb1e8;border-radius:7px;"></div>
<span class="u" style="top:1686.03px;font-size:20px;color:#161616;left:1818.65px;transform:translateX(-50%);letter-spacing:-1.00px;">ROIC</span>
<div class="a" style="left:1867px;top:1676.2px;width:84.6px;height:35.6px;background:#4bb1e8;border-radius:7px;"></div>
<span class="u" style="top:1686.03px;font-size:20px;color:#161616;left:1909.6px;transform:translateX(-50%);letter-spacing:-0.18px;">Charts</span>
<div class="a" style="left:1965px;top:1676.2px;width:64px;height:35.6px;background:#4bb1e8;border-radius:7px;"></div>
<span class="u" style="top:1686.03px;font-size:20px;color:#161616;left:1997.2px;transform:translateX(-50%);letter-spacing:-1.00px;">KPIs</span>
<div class="a" style="left:2042px;top:1676.2px;width:29.6px;height:35.6px;background:#4bb1e8;border-radius:7px 0 0 7px;overflow:hidden;"><span class="u" style="left:12.5px;top:9.6px;font-size:20px;color:#161616;">Sc</span></div>
<div class="a" style="left:292px;top:1680.3px;width:1px;height:27.4px;background:#5a5a5a;"></div>
<div class="a" style="left:433px;top:1680.3px;width:1px;height:27.4px;background:#5a5a5a;"></div>
<div class="a" style="left:551.5px;top:1680.3px;width:1px;height:27.4px;background:#5a5a5a;"></div>
<div class="a" style="left:723.1px;top:1680.3px;width:1px;height:27.4px;background:#5a5a5a;"></div>
<div class="a" style="left:825px;top:1680.3px;width:1px;height:27.4px;background:#5a5a5a;"></div>
<div class="a" style="left:925.1px;top:1680.3px;width:1px;height:27.4px;background:#5a5a5a;"></div>
<div class="a" style="left:1050.5px;top:1680.3px;width:1px;height:27.4px;background:#5a5a5a;"></div>
<div class="a" style="left:1154px;top:1680.3px;width:1px;height:27.4px;background:#5a5a5a;"></div>
<div class="a" style="left:1208.8px;top:1680.3px;width:1px;height:27.4px;background:#5a5a5a;"></div>
<div class="a" style="left:1270px;top:1680.3px;width:1px;height:27.4px;background:#5a5a5a;"></div>
<div class="a" style="left:1330.9px;top:1680.3px;width:1px;height:27.4px;background:#5a5a5a;"></div>
<div class="a" style="left:1458.8px;top:1680.3px;width:1px;height:27.4px;background:#5a5a5a;"></div>
<div class="a" style="left:1587px;top:1680.3px;width:1px;height:27.4px;background:#5a5a5a;"></div>
<div class="a" style="left:1714px;top:1680.3px;width:1px;height:27.4px;background:#5a5a5a;"></div>
<div class="a" style="left:1774.9px;top:1680.3px;width:1px;height:27.4px;background:#5a5a5a;"></div>
<div class="a" style="left:1860.1px;top:1680.3px;width:1px;height:27.4px;background:#5a5a5a;"></div>
<div class="a" style="left:1957.5px;top:1680.3px;width:1px;height:27.4px;background:#5a5a5a;"></div>
<div class="a" style="left:2034.9px;top:1680.3px;width:1px;height:27.4px;background:#5a5a5a;"></div>
<div class="a" style="left:832px;top:1669.7px;width:87.2px;height:42.5px;border-radius:0 0 8px 8px;background:linear-gradient(#fff 35%,#fffdf0 70%,#fffbe2);"></div>
<svg class="a" style="left:824px;top:1669.7px" width="8" height="8" viewBox="0 0 8 8"><path d="M8 0V8C8 3.6 4.4 0 0 0Z" fill="#fff"/></svg>
<svg class="a" style="left:919.2px;top:1669.7px" width="8" height="8" viewBox="0 0 8 8"><path d="M0 0V8C0 3.6 3.6 0 8 0Z" fill="#fff"/></svg>
<span class="u" style="top:1681.03px;font-size:20px;color:#161616;left:844px;letter-spacing:-1.00px;">CAPEX</span>
<div class="a" style="left:844px;top:1704.8px;width:63px;height:2.8px;background:#1e7a45;border-radius:1.5px;"></div>
<div class="a" style="left:2087.6px;top:1690.8px;width:4px;height:4px;background:#e0e0e0;border-radius:50%;"></div>
<div class="a" style="left:2093.4px;top:1690.8px;width:4px;height:4px;background:#e0e0e0;border-radius:50%;"></div>
<div class="a" style="left:2099.2px;top:1690.8px;width:4px;height:4px;background:#e0e0e0;border-radius:50%;"></div>
<div class="a" style="left:2135.2px;top:1692.3px;width:17.2px;height:1.4px;background:#e6e6e6;"></div>
<div class="a" style="left:2143.1px;top:1684.4px;width:1.4px;height:17.2px;background:#e6e6e6;"></div>
<div class="a" style="left:2190px;top:1685.7px;width:3.4px;height:3.4px;background:#e0e0e0;"></div>
<div class="a" style="left:2190px;top:1692.1px;width:3.4px;height:3.4px;background:#e0e0e0;"></div>
<div class="a" style="left:2190px;top:1698.5px;width:3.4px;height:3.4px;background:#e0e0e0;"></div>
<div class="a" style="left:2216.4px;top:1680.7px;width:644.1px;height:24.5px;background:#161616;border-radius:12px;"></div>
<svg class="a" style="left:2222px;top:1684px" width="14" height="18" viewBox="0 0 14 18"><path d="M2.2 9C2.2 8.2 2.6 7.8 3.4 7.2L9.8 2.6C10.7 2 11.6 2.4 11.6 3.6V14.4C11.6 15.6 10.7 16 9.8 15.4L3.4 10.8C2.6 10.2 2.2 9.8 2.2 9Z" fill="#9a9a9a"/></svg>
<svg class="a" style="left:2841px;top:1684px" width="14" height="18" viewBox="0 0 14 18"><path d="M11.8 9C11.8 8.2 11.4 7.8 10.6 7.2L4.2 2.6C3.3 2 2.4 2.4 2.4 3.6V14.4C2.4 15.6 3.3 16 4.2 15.4L10.6 10.8C11.4 10.2 11.8 9.8 11.8 9Z" fill="#9a9a9a"/></svg>
<div class="a" style="left:2241.6px;top:1686.8px;width:55.7px;height:12.6px;background:#9c9c9c;border-radius:6.3px;"></div>
<div class="a" style="left:11px;top:1718.2px;width:2880px;height:32.6px;background:#141414;border-top:1px solid #2c2c2c;box-sizing:border-box;"></div>
<span class="u" style="top:1727.02px;font-size:15px;color:#f0f0f0;left:27.6px;letter-spacing:-0.39px;">Ready</span>
<svg class="a" style="left:98px;top:1724px" width="26" height="24" viewBox="0 0 26 24"><path d="M9.6 20.2H2.2V3.2H22.4V9.4" fill="none" stroke="#e8e8e8" stroke-width="1.6"/><path d="M2.2 6.2H22.4" stroke="#e8e8e8" stroke-width="1.6"/><path d="M5 10.4H11M5 13.6H9.6M5 16.8H9.2" stroke="#e8e8e8" stroke-width="1.5"/><circle cx="17" cy="15.8" r="5.8" fill="none" stroke="#e8e8e8" stroke-width="1.6"/><circle cx="17" cy="15.8" r="2.7" fill="#e8e8e8"/></svg>
<svg class="a" style="left:145px;top:1722.5px" width="26" height="26" viewBox="0 0 26 26"><circle cx="10.4" cy="4.6" r="2.1" fill="none" stroke="#ececec" stroke-width="1.5"/><path d="M2.6 7.6C5.4 9.6 8.2 10 10.4 10S15.4 9.6 18.2 7.2" fill="none" stroke="#ececec" stroke-width="1.6" stroke-linecap="round"/><path d="M8 10V14.6L5 21.6M12.8 10V14.2L14 17" fill="none" stroke="#ececec" stroke-width="1.6" stroke-linecap="round" stroke-linejoin="round"/><path d="M8.4 15.4L10.4 13.6L12.2 15" fill="none" stroke="#ececec" stroke-width="1.4"/><path d="M14.2 15.4L21.4 22.6M21.4 15.4L14.2 22.6" stroke="#ececec" stroke-width="1.6" stroke-linecap="round"/></svg>
<span class="u" style="top:1728.03px;font-size:15.6px;color:#f4f4f4;font-weight:700;left:173.3px;letter-spacing:0.04px;">Accessibility: Investigate</span>
<div class="a" style="left:2445px;top:1718.8px;width:60px;height:32px;background:#2c2c2c;"></div>
<svg class="a" style="left:2463px;top:1723.5px" width="23" height="23" viewBox="0 0 23 23"><rect x="2" y="1.8" width="19" height="19" fill="none" stroke="#ececec" stroke-width="1.6"/><path d="M8.3 1.8V20.8M14.7 1.8V20.8M2 8.1H21M2 14.5H21" stroke="#ececec" stroke-width="1.5"/></svg>
<svg class="a" style="left:2523px;top:1723.5px" width="24" height="23" viewBox="0 0 24 23"><rect x="2" y="1.8" width="20" height="19" fill="none" stroke="#ececec" stroke-width="1.6"/><rect x="6.6" y="5.8" width="10.8" height="11" fill="none" stroke="#ececec" stroke-width="1.5"/><path d="M9 9.4H15M9 12H15M9 14.6H15" stroke="#ececec" stroke-width="1.2"/></svg>
<svg class="a" style="left:2582px;top:1723.5px" width="25" height="23" viewBox="0 0 25 23"><rect x="2.2" y="1.8" width="20" height="19" fill="none" stroke="#ececec" stroke-width="1.6"/><path d="M7 1.8V11.4H17.2V1.8" fill="none" stroke="#ececec" stroke-width="1.6"/></svg>
<div class="a" style="left:2633.4px;top:1734.6px;width:11.4px;height:1.4px;background:#d8d8d8;"></div>
<div class="a" style="left:2653px;top:1734.7px;width:147.8px;height:1.2px;background:#bcbcbc;"></div>
<div class="a" style="left:2727px;top:1730.6px;width:1.3px;height:9.4px;background:#bcbcbc;"></div>
<div class="a" style="left:2733px;top:1726.2px;width:7.6px;height:16.8px;background:#b8b8b8;"></div>
<div class="a" style="left:2809px;top:1734.6px;width:11.4px;height:1.4px;background:#d8d8d8;"></div>
<div class="a" style="left:2814px;top:1729.6px;width:1.4px;height:11.4px;background:#d8d8d8;"></div>
<span class="u" style="top:1727.02px;font-size:15px;color:#f0f0f0;left:2840.2px;letter-spacing:0.08px;">140%</span>
<div class="a" style="left:2891px;top:0px;width:11px;height:1762px;background:#000;"></div>
<div class="a" style="left:0px;top:1750.8px;width:2902px;height:11.2px;background:#000;"></div>
</body></html>
